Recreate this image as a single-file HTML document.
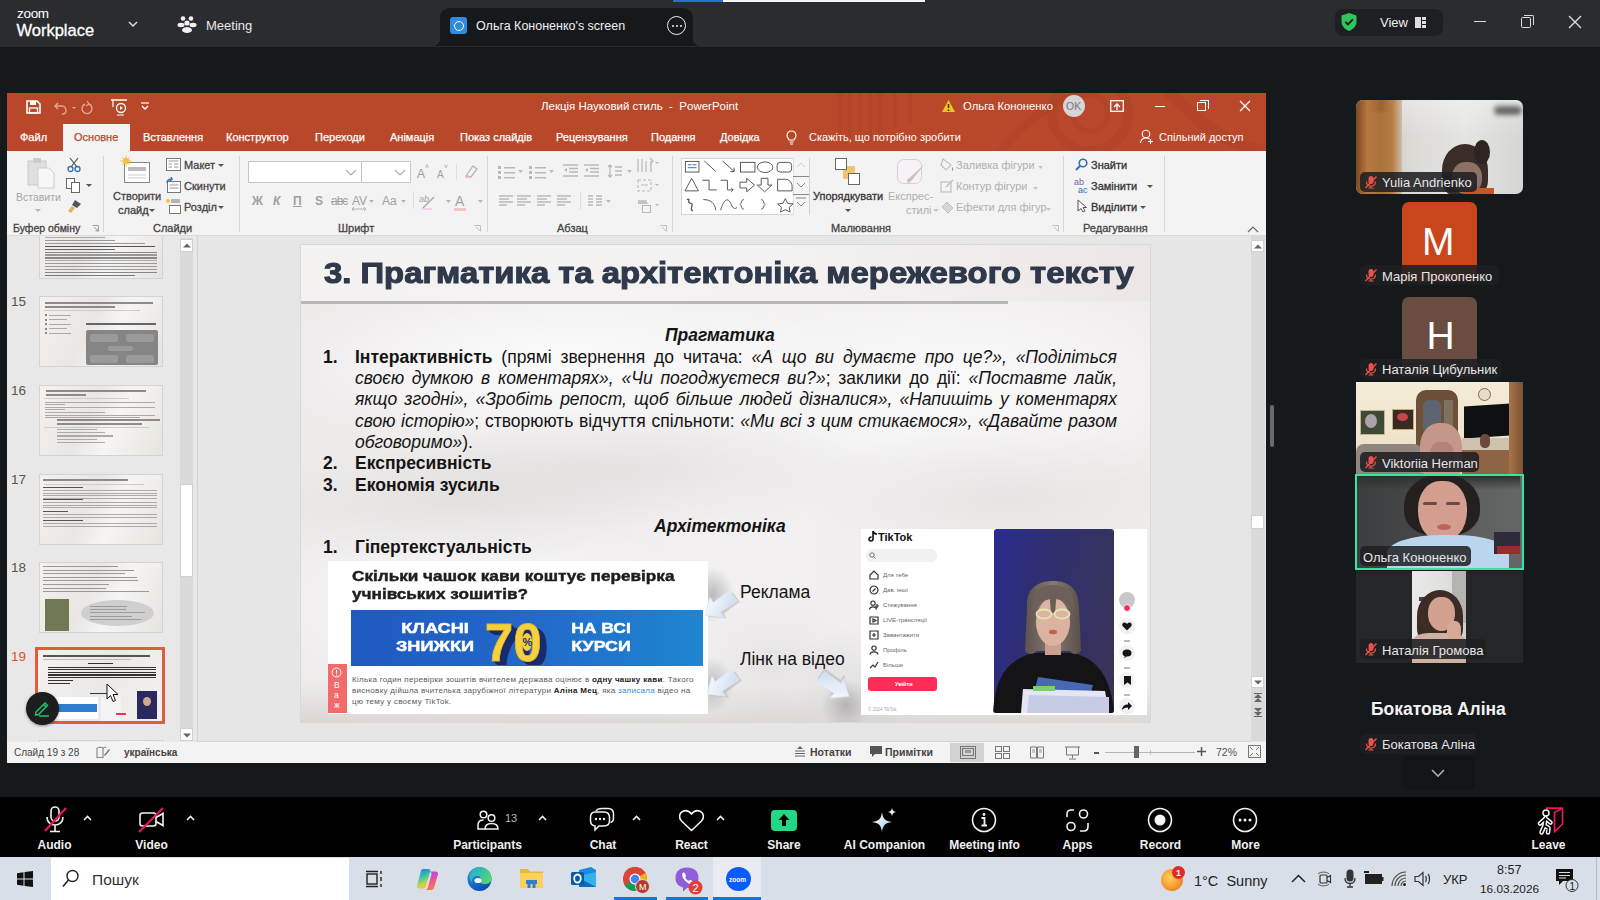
<!DOCTYPE html>
<html><head><meta charset="utf-8">
<style>
*{margin:0;padding:0;box-sizing:border-box}
html,body{width:1600px;height:900px;overflow:hidden;background:#16191c;font-family:"Liberation Sans",sans-serif;position:relative}
.a{position:absolute}
.t{position:absolute;white-space:nowrap;line-height:1}
svg{position:absolute;overflow:visible}
</style></head><body>
<div class="a" style="left:0px;top:0px;width:1600px;height:47px;background:#2b2c2f;"></div>
<div class="t" style="left:17px;top:7.1px;font-size:13.5px;color:#fff;font-weight:normal;font-style:normal;letter-spacing:-0.3px">zoom</div>
<div class="t" style="left:16.5px;top:22.0px;font-size:16.5px;color:#fff;font-weight:normal;font-style:normal;-webkit-text-stroke:0.3px #fff">Workplace</div>
<svg style="left:127px;top:19px" width="12" height="10" viewBox="0 0 12 10"><path d="M2 3 L6 7 L10 3" stroke="#ddd" stroke-width="1.5" fill="none"/></svg><svg style="left:177px;top:15px" width="20" height="20" viewBox="0 0 20 20" fill="#f2f2f2"><circle cx="6" cy="3.5" r="2.3"/><circle cx="14" cy="3.5" r="2.3"/><circle cx="10" cy="8" r="2.6"/><ellipse cx="4" cy="10" rx="3.5" ry="2.2"/><ellipse cx="16" cy="10" rx="3.5" ry="2.2"/><ellipse cx="10" cy="15" rx="5" ry="3"/></svg><div class="t" style="left:206px;top:19.0px;font-size:13px;color:#e8e8e8;font-weight:normal;font-style:normal;">Meeting</div>
<div class="a" style="left:440px;top:8px;width:253px;height:38px;background:#16191c;border-radius:9px 9px 0 0"></div>
<div class="a" style="left:432px;top:38px;width:8px;height:8px;background:radial-gradient(circle at 0 0,#2b2c2f 8px,#16191c 8.5px);"></div>
<div class="a" style="left:693px;top:38px;width:8px;height:8px;background:radial-gradient(circle at 100% 0,#2b2c2f 8px,#16191c 8.5px);"></div>
<div class="a" style="left:450px;top:17px;width:17px;height:17px;background:#2d8cdf;border-radius:3px"></div>
<div class="a" style="left:453.5px;top:20.5px;width:10px;height:10px;background:transparent;border:1.6px solid #fff;border-radius:50%"></div>
<div class="t" style="left:476px;top:20.2px;font-size:12.5px;color:#f0f0f0;font-weight:normal;font-style:normal;">Ольга Кононенко's screen</div>
<div class="a" style="left:667px;top:16px;width:19px;height:19px;background:transparent;border:1.6px solid #eee;border-radius:50%"></div>
<div class="a" style="left:671.5px;top:24.5px;width:2px;height:2px;background:#eee;box-shadow:4px 0 #eee,8px 0 #eee;border-radius:1px"></div>
<div class="a" style="left:673px;top:0px;width:50px;height:2px;background:#2c6fd1;"></div>
<div class="a" style="left:723px;top:0px;width:202px;height:2px;background:#f5f5f5;"></div>
<div class="a" style="left:1335px;top:9px;width:108px;height:27px;background:#1e1f22;border-radius:8px"></div>
<svg style="left:1340px;top:12px" width="18" height="20" viewBox="0 0 18 20"><path d="M9 1 L16.5 3.5 V9.5 C16.5 14 13 17.5 9 19 C5 17.5 1.5 14 1.5 9.5 V3.5 Z" fill="#2fc55a"/><path d="M5.3 9.8 L8 12.4 L12.8 7.4" stroke="#1a1a1a" stroke-width="1.8" fill="none"/></svg><div class="t" style="left:1380px;top:15.6px;font-size:13px;color:#eee;font-weight:normal;font-style:normal;">View</div>
<div class="a" style="left:1415px;top:17px;width:6px;height:11px;background:#ddd;"></div>
<div class="a" style="left:1422px;top:17px;width:4px;height:3px;background:#ddd;box-shadow:0 4px #ddd,0 8px #ddd"></div>
<div class="a" style="left:1474px;top:21px;width:12px;height:1.3px;background:#ddd;"></div>
<div class="a" style="left:1521px;top:17px;width:10px;height:11px;background:transparent;border:1.3px solid #ddd;border-radius:1.5px"></div>
<div class="a" style="left:1524px;top:15px;width:10px;height:10px;background:transparent;border-top:1.3px solid #ddd;border-right:1.3px solid #ddd;border-radius:0 2px 0 0"></div>
<svg style="left:1568px;top:15px" width="14" height="14" viewBox="0 0 14 14"><path d="M1 1 L13 13 M13 1 L1 13" stroke="#ddd" stroke-width="1.4"/></svg><div class="a" style="left:7px;top:93px;width:1259px;height:670px;background:#e6e6e6;"></div>
<div class="a" style="left:7px;top:93px;width:1259px;height:58px;background:#b9482b;"></div>
<svg style="left:800px;top:93px;overflow:hidden" width="466" height="58" viewBox="0 0 466 58"><g fill="none" stroke="#a63e24" stroke-opacity="0.35"><path d="M40 0 V40 M50 0 V45 M60 0 V38 M70 0 V48 M80 0 V42 M95 0 V35 M110 0 V30" stroke-width="4"/><circle cx="290" cy="20" r="38" stroke-width="10"/><circle cx="290" cy="20" r="18" stroke-width="5"/><path d="M360 -10 C400 30 420 50 470 60" stroke-width="12"/><path d="M200 60 C230 20 260 5 300 -5" stroke-width="8"/></g></svg><svg style="left:26px;top:100px" width="15" height="14" viewBox="0 0 15 14"><path d="M1 1 H11 L14 4 V13 H1 Z" fill="none" stroke="#fff" stroke-width="1.6"/><rect x="4" y="1" width="6" height="4" fill="#fff"/><rect x="3.5" y="8" width="8" height="5" fill="none" stroke="#fff" stroke-width="1.3"/></svg><svg style="left:53px;top:101px" width="40" height="14" viewBox="0 0 40 14"><path d="M3 5 H9 C12 5 13 8 13 10 C13 12 11 13 9 13" fill="none" stroke="#e8a797" stroke-width="1.4"/><path d="M5 2 L2 5 L5 8" fill="none" stroke="#e8a797" stroke-width="1.4"/><path d="M19 6 L21 8 L23 6" fill="#e8a797"/><path d="M36 3 A5 5 0 1 1 32 3" fill="none" stroke="#e8a797" stroke-width="1.4"/><path d="M34 0 L36 3 L33 5" fill="none" stroke="#e8a797" stroke-width="1.2"/></svg><svg style="left:111px;top:99px" width="16" height="17" viewBox="0 0 16 17"><path d="M0 1 H16" stroke="#fff" stroke-width="1.5"/><path d="M2 1 V8" stroke="#fff" stroke-width="1.2"/><circle cx="10" cy="9" r="4.5" fill="none" stroke="#fff" stroke-width="1.3"/><path d="M9 7 L12 9 L9 11 Z" fill="#fff"/><path d="M6 16 H13" stroke="#fff" stroke-width="1"/></svg><svg style="left:140px;top:102px" width="10" height="9" viewBox="0 0 10 9"><path d="M1 1 H9" stroke="#fff" stroke-width="1.2"/><path d="M2 4 L5 7 L8 4" fill="none" stroke="#fff" stroke-width="1.3"/></svg><div class="t" style="left:541px;top:101.3px;font-size:11.5px;color:#fff;font-weight:normal;font-style:normal;">Лекція Науковий стиль&nbsp; - &nbsp;PowerPoint</div>
<svg style="left:941px;top:99px" width="15" height="14" viewBox="0 0 15 14"><path d="M7.5 1 L14 13 H1 Z" fill="#f2c31b"/><path d="M7.5 5 V9 M7.5 10.5 V12" stroke="#333" stroke-width="1.5"/></svg><div class="t" style="left:963px;top:101.4px;font-size:11.3px;color:#fff;font-weight:normal;font-style:normal;">Ольга Кононенко</div>
<div class="a" style="left:1063px;top:95px;width:22px;height:22px;background:#d5d5d5;border-radius:50%"></div>
<div class="t" style="left:1066px;top:101.1px;font-size:10.5px;color:#777;font-weight:normal;font-style:normal;">OK</div>
<svg style="left:1110px;top:100px" width="14" height="12" viewBox="0 0 14 12"><rect x="0.7" y="0.7" width="12.6" height="10.6" fill="none" stroke="#fff" stroke-width="1.3"/><path d="M4 7 L7 4 L10 7 M7 4 V10" stroke="#fff" stroke-width="1.3" fill="none"/></svg><div class="a" style="left:1155px;top:106px;width:10px;height:1.2px;background:#fff;"></div>
<div class="a" style="left:1197px;top:102px;width:9px;height:9px;background:transparent;border:1.1px solid #fff"></div>
<div class="a" style="left:1199.5px;top:99.5px;width:9px;height:9px;background:transparent;border-top:1.1px solid #fff;border-right:1.1px solid #fff"></div>
<svg style="left:1239px;top:100px" width="12" height="12" viewBox="0 0 12 12"><path d="M1 1 L11 11 M11 1 L1 11" stroke="#fff" stroke-width="1.2"/></svg><div class="a" style="left:63px;top:124px;width:67px;height:28px;background:#f3f3f3;"></div>
<div class="t" style="left:20px;top:131.7px;font-size:11px;color:#fff;font-weight:normal;font-style:normal;-webkit-text-stroke:0.25px #fff">Файл</div>
<div class="t" style="left:143px;top:131.7px;font-size:11px;color:#fff;font-weight:normal;font-style:normal;-webkit-text-stroke:0.25px #fff">Вставлення</div>
<div class="t" style="left:226px;top:131.7px;font-size:11px;color:#fff;font-weight:normal;font-style:normal;-webkit-text-stroke:0.25px #fff">Конструктор</div>
<div class="t" style="left:315px;top:131.7px;font-size:11px;color:#fff;font-weight:normal;font-style:normal;-webkit-text-stroke:0.25px #fff">Переходи</div>
<div class="t" style="left:390px;top:131.7px;font-size:11px;color:#fff;font-weight:normal;font-style:normal;-webkit-text-stroke:0.25px #fff">Анімація</div>
<div class="t" style="left:460px;top:131.7px;font-size:11px;color:#fff;font-weight:normal;font-style:normal;-webkit-text-stroke:0.25px #fff">Показ слайдів</div>
<div class="t" style="left:556px;top:131.7px;font-size:11px;color:#fff;font-weight:normal;font-style:normal;-webkit-text-stroke:0.25px #fff">Рецензування</div>
<div class="t" style="left:651px;top:131.7px;font-size:11px;color:#fff;font-weight:normal;font-style:normal;-webkit-text-stroke:0.25px #fff">Подання</div>
<div class="t" style="left:720px;top:131.7px;font-size:11px;color:#fff;font-weight:normal;font-style:normal;-webkit-text-stroke:0.25px #fff">Довідка</div>
<div class="t" style="left:74px;top:131.7px;font-size:11px;color:#b9482b;font-weight:normal;font-style:normal;-webkit-text-stroke:0.25px #b9482b">Основне</div>
<svg style="left:786px;top:130px" width="11" height="15" viewBox="0 0 11 15"><path d="M5.5 1 C2.5 1 1 3 1 5.5 C1 7.5 2.5 8.5 3 10 H8 C8.5 8.5 10 7.5 10 5.5 C10 3 8.5 1 5.5 1 Z M3.5 12 H7.5 M4 14 H7" fill="none" stroke="#fff" stroke-width="1.1"/></svg><div class="t" style="left:809px;top:131.7px;font-size:11px;color:#fff;font-weight:normal;font-style:normal;">Скажіть, що потрібно зробити</div>
<svg style="left:1140px;top:129px" width="14" height="15" viewBox="0 0 14 15"><circle cx="6" cy="5" r="3.8" fill="none" stroke="#fff" stroke-width="1.1"/><path d="M0.5 14 C1 10 3 9 6 9 C7.5 9 8.5 9.3 9.5 10 M10.5 10 V15 M8 12.5 H13" fill="none" stroke="#fff" stroke-width="1.1"/></svg><div class="t" style="left:1159px;top:131.7px;font-size:11px;color:#fff;font-weight:normal;font-style:normal;">Спільний доступ</div>
<div class="a" style="left:7px;top:151px;width:1259px;height:85px;background:#f3f3f3;"></div>
<div class="a" style="left:7px;top:235px;width:1259px;height:1px;background:#dadada;"></div>
<div class="a" style="left:103px;top:156px;width:1px;height:76px;background:#d6d6d6;"></div>
<div class="a" style="left:239px;top:156px;width:1px;height:76px;background:#d6d6d6;"></div>
<div class="a" style="left:487px;top:156px;width:1px;height:76px;background:#d6d6d6;"></div>
<div class="a" style="left:671.5px;top:156px;width:1px;height:76px;background:#d6d6d6;"></div>
<div class="a" style="left:1063px;top:156px;width:1px;height:76px;background:#d6d6d6;"></div>
<div class="a" style="left:1164px;top:156px;width:1px;height:76px;background:#d6d6d6;"></div>
<svg style="left:26px;top:156px" width="30" height="34" viewBox="0 0 30 34"><rect x="2" y="5" width="18" height="24" fill="#e3dede" stroke="#cfcaca"/><rect x="7" y="2" width="8" height="5" rx="1" fill="#cfcaca"/><path d="M12 12 H23 L28 17 V32 H12 Z" fill="#f7f7f7" stroke="#cfcfcf"/></svg><div class="t" style="left:16px;top:192.1px;font-size:10.5px;color:#a6a6a6;font-weight:normal;font-style:normal;">Вставити</div>
<svg style="left:35px;top:209px" width="6" height="4" viewBox="0 0 6 4"><path d="M0 0 H6 L3 3 Z" fill="#b5b5b5"/></svg><svg style="left:66px;top:157px" width="16" height="15" viewBox="0 0 16 15"><path d="M4 1 L11 10 M12 1 L5 10" stroke="#555" stroke-width="1.2"/><circle cx="4.5" cy="12" r="2.5" fill="none" stroke="#2f6fb5" stroke-width="1.3"/><circle cx="11.5" cy="12" r="2.5" fill="none" stroke="#2f6fb5" stroke-width="1.3"/></svg><svg style="left:66px;top:178px" width="28" height="15" viewBox="0 0 28 15"><rect x="0.5" y="0.5" width="8" height="10" fill="#fff" stroke="#666"/><rect x="5.5" y="4.5" width="8" height="10" fill="#fff" stroke="#666"/><path d="M20 6 H26 L23 9 Z" fill="#555"/></svg><svg style="left:66px;top:199px" width="16" height="15" viewBox="0 0 16 15"><path d="M9 1 L15 5 L11 9 L6 6 Z" fill="#555"/><path d="M6 7 L2 12 L5 14 L9 9 Z" fill="#e0b062"/></svg><div class="t" style="left:13px;top:223.1px;font-size:10.5px;color:#444;font-weight:normal;font-style:normal;-webkit-text-stroke:0.3px #444">Буфер обміну</div>
<svg style="left:92px;top:225px" width="7" height="7" viewBox="0 0 7 7"><path d="M0.5 0.5 H6.5 V6.5 M2 2 L6 6 M6 3.5 V6 H3.5" fill="none" stroke="#999" stroke-width="0.9"/></svg><svg style="left:120px;top:155px" width="32" height="30" viewBox="0 0 32 30"><rect x="4.5" y="7.5" width="25" height="20" fill="#fff" stroke="#888"/><rect x="8" y="12" width="18" height="4" fill="#bbb"/><path d="M8 20 H26 M8 23 H26" stroke="#ccc"/><circle cx="6" cy="6" r="3.2" fill="#f5c242"/><path d="M6 0 V12 M0 6 H12 M2 2 L10 10 M10 2 L2 10" stroke="#f5c242" stroke-width="0.8"/></svg><div class="t" style="left:113px;top:190.7px;font-size:11px;color:#444;font-weight:normal;font-style:normal;-webkit-text-stroke:0.3px #444">Створити</div>
<div class="t" style="left:118px;top:204.7px;font-size:11px;color:#444;font-weight:normal;font-style:normal;-webkit-text-stroke:0.3px #444">слайд</div>
<svg style="left:149px;top:209px" width="6" height="4" viewBox="0 0 6 4"><path d="M0 0 H6 L3 3 Z" fill="#555"/></svg><svg style="left:166px;top:158px" width="15" height="13" viewBox="0 0 15 13"><rect x="0.5" y="0.5" width="14" height="12" fill="#fff" stroke="#777"/><path d="M2.5 3 H12.5 M2.5 6 H6 M2.5 9 H6 M8 6 H12.5 M8 9 H12.5" stroke="#999"/></svg><div class="t" style="left:184px;top:159.7px;font-size:11px;color:#444;font-weight:normal;font-style:normal;-webkit-text-stroke:0.3px #444">Макет</div>
<svg style="left:218px;top:164px" width="6" height="4" viewBox="0 0 6 4"><path d="M0 0 H6 L3 3 Z" fill="#555"/></svg><svg style="left:166px;top:178px" width="15" height="15" viewBox="0 0 15 15"><rect x="1.5" y="3.5" width="13" height="11" fill="#fff" stroke="#777"/><path d="M3.5 7 H12.5 M3.5 10 H12.5" stroke="#999"/><path d="M1 5 C1 2 3 1 6 1 L5 -1 M6 1 L4 3" stroke="#2f6fb5" stroke-width="1.3" fill="none"/></svg><div class="t" style="left:184px;top:180.7px;font-size:11px;color:#444;font-weight:normal;font-style:normal;-webkit-text-stroke:0.3px #444">Скинути</div>
<svg style="left:166px;top:199px" width="15" height="15" viewBox="0 0 15 15"><rect x="3.5" y="6.5" width="11" height="8" fill="#fff" stroke="#777"/><path d="M5 3 H14 M5 1 H14" stroke="#777"/><circle cx="2" cy="2" r="2" fill="#f5c242"/></svg><div class="t" style="left:184px;top:201.7px;font-size:11px;color:#444;font-weight:normal;font-style:normal;-webkit-text-stroke:0.3px #444">Розділ</div>
<svg style="left:218px;top:206px" width="6" height="4" viewBox="0 0 6 4"><path d="M0 0 H6 L3 3 Z" fill="#555"/></svg><div class="t" style="left:153px;top:222.7px;font-size:11px;color:#444;font-weight:normal;font-style:normal;-webkit-text-stroke:0.3px #444">Слайди</div>
<div class="a" style="left:247.5px;top:161px;width:114px;height:22px;background:#fff;border:1px solid #c6c6c6"></div>
<div class="a" style="left:361px;top:161px;width:50px;height:22px;background:#fff;border:1px solid #c6c6c6"></div>
<svg style="left:345px;top:169px" width="12" height="7" viewBox="0 0 12 7"><path d="M1 1 L6 6 L11 1" fill="none" stroke="#aaa" stroke-width="1.1"/></svg><svg style="left:394px;top:169px" width="12" height="7" viewBox="0 0 12 7"><path d="M1 1 L6 6 L11 1" fill="none" stroke="#aaa" stroke-width="1.1"/></svg><div class="t" style="left:417px;top:167.8px;font-size:12px;color:#a0a0a0;font-weight:normal;font-style:normal;">A</div>
<div class="t" style="left:425px;top:163.1px;font-size:7px;color:#a0a0a0;font-weight:normal;font-style:normal;">˄</div>
<div class="t" style="left:437px;top:169.5px;font-size:10px;color:#a0a0a0;font-weight:normal;font-style:normal;">A</div>
<div class="t" style="left:444px;top:163.1px;font-size:7px;color:#a0a0a0;font-weight:normal;font-style:normal;">˅</div>
<div class="a" style="left:456px;top:164px;width:1px;height:16px;background:#ddd;"></div>
<svg style="left:464px;top:164px" width="14" height="14" viewBox="0 0 14 14"><path d="M2 12 L9 2 L13 5 L7 13 Z" fill="none" stroke="#b5b5b5" stroke-width="1.3"/><path d="M1 13 H6" stroke="#e8b4d0" stroke-width="1.5"/></svg><div class="t" style="left:252px;top:194.8px;font-size:12px;color:#a0a0a0;font-weight:normal;font-style:normal;font-weight:bold">Ж</div>
<div class="t" style="left:273px;top:194.8px;font-size:12px;color:#a0a0a0;font-weight:normal;font-style:normal;font-style:italic;font-weight:bold">К</div>
<div class="t" style="left:293px;top:194.8px;font-size:12px;color:#a0a0a0;font-weight:normal;font-style:normal;text-decoration:underline;font-weight:bold">П</div>
<div class="t" style="left:315px;top:194.8px;font-size:12px;color:#a0a0a0;font-weight:normal;font-style:normal;font-weight:bold">S</div>
<div class="t" style="left:331px;top:194.8px;font-size:12px;color:#a0a0a0;font-weight:normal;font-style:normal;text-decoration:line-through;letter-spacing:-1px">abc</div>
<div class="t" style="left:352px;top:194.8px;font-size:12px;color:#a0a0a0;font-weight:normal;font-style:normal;">AV</div>
<div class="t" style="left:382px;top:194.8px;font-size:12px;color:#a0a0a0;font-weight:normal;font-style:normal;">Aa</div>
<svg style="left:352px;top:207px" width="14" height="4" viewBox="0 0 14 4"><path d="M0 2 H14 M0 2 L2 0 M0 2 L2 4 M14 2 L12 0 M14 2 L12 4" stroke="#aaa" stroke-width="0.9"/></svg><svg style="left:369px;top:200px" width="5" height="3" viewBox="0 0 5 3"><path d="M0 0 H5 L2.5 3 Z" fill="#b5b5b5"/></svg><svg style="left:401px;top:200px" width="5" height="3" viewBox="0 0 5 3"><path d="M0 0 H5 L2.5 3 Z" fill="#b5b5b5"/></svg><svg style="left:446px;top:200px" width="5" height="3" viewBox="0 0 5 3"><path d="M0 0 H5 L2.5 3 Z" fill="#b5b5b5"/></svg><svg style="left:478px;top:200px" width="5" height="3" viewBox="0 0 5 3"><path d="M0 0 H5 L2.5 3 Z" fill="#b5b5b5"/></svg><div class="a" style="left:413px;top:191px;width:1px;height:18px;background:#ddd;"></div>
<div class="t" style="left:419px;top:195.4px;font-size:9px;color:#a0a0a0;font-weight:normal;font-style:italic;">ab</div>
<svg style="left:420px;top:196px" width="16" height="14" viewBox="0 0 16 14"><path d="M2 13 L14 1" stroke="#aaa" stroke-width="1.5"/><path d="M2 13 H12" stroke="#f1d3e8" stroke-width="2"/></svg><div class="t" style="left:455px;top:194.1px;font-size:14px;color:#a0a0a0;font-weight:normal;font-style:normal;">A</div>
<div class="a" style="left:454px;top:208px;width:12px;height:2.5px;background:#f3c7c7;"></div>
<div class="t" style="left:338px;top:222.7px;font-size:11px;color:#444;font-weight:normal;font-style:normal;-webkit-text-stroke:0.3px #444">Шрифт</div>
<svg style="left:474px;top:225px" width="7" height="7" viewBox="0 0 7 7"><path d="M0.5 0.5 H6.5 V6.5 M2 2 L6 6" fill="none" stroke="#bbb" stroke-width="0.9"/></svg><svg style="left:497px;top:165px" width="20" height="14" viewBox="0 0 20 14"><rect x="1" y="1" width="3" height="3" fill="#b9b9b9"/><rect x="7" y="2" width="11" height="1.5" fill="#b9b9b9"/><rect x="1" y="6" width="3" height="3" fill="#b9b9b9"/><rect x="7" y="7" width="11" height="1.5" fill="#b9b9b9"/><rect x="1" y="11" width="3" height="3" fill="#b9b9b9"/><rect x="7" y="12" width="11" height="1.5" fill="#b9b9b9"/></svg><svg style="left:528px;top:165px" width="20" height="14" viewBox="0 0 20 14"><rect x="1" y="1" width="3" height="3" fill="#b9b9b9"/><rect x="7" y="2" width="11" height="1.5" fill="#b9b9b9"/><rect x="1" y="6" width="3" height="3" fill="#b9b9b9"/><rect x="7" y="7" width="11" height="1.5" fill="#b9b9b9"/><rect x="1" y="11" width="3" height="3" fill="#b9b9b9"/><rect x="7" y="12" width="11" height="1.5" fill="#b9b9b9"/></svg><svg style="left:518px;top:170px" width="5" height="3" viewBox="0 0 5 3"><path d="M0 0 H5 L2.5 3 Z" fill="#bbb"/></svg><svg style="left:549px;top:170px" width="5" height="3" viewBox="0 0 5 3"><path d="M0 0 H5 L2.5 3 Z" fill="#bbb"/></svg><svg style="left:563px;top:164px" width="15" height="13" viewBox="0 0 15 13"><path d="M0 1 H15 M6 4.5 H15 M6 8 H15 M0 12 H15" stroke="#b9b9b9" stroke-width="1.3"/><path d="M1 6 L4 4 V8 Z" fill="#b9b9b9"/></svg><svg style="left:584px;top:164px" width="15" height="13" viewBox="0 0 15 13"><path d="M0 1 H15 M6 4.5 H15 M6 8 H15 M0 12 H15" stroke="#b9b9b9" stroke-width="1.3"/><path d="M1 6 L4 4 V8 Z" fill="#b9b9b9"/></svg><svg style="left:607px;top:164px" width="20" height="14" viewBox="0 0 20 14"><path d="M3 1 V13 M1 3 L3 1 L5 3 M1 11 L3 13 L5 11 M8 3 H15 M8 7 H15 M8 11 H15" stroke="#b9b9b9" stroke-width="1.3" fill="none"/></svg><svg style="left:627px;top:170px" width="5" height="3" viewBox="0 0 5 3"><path d="M0 0 H5 L2.5 3 Z" fill="#bbb"/></svg><svg style="left:637px;top:157px" width="22" height="16" viewBox="0 0 22 16"><path d="M1 2 V15 M5 2 V15 M9 4 V15 M13 1 L16 4 L13 8 M14 4 V15" stroke="#b9b9b9" stroke-width="1.2" fill="none"/><path d="M18 5 H22 L20 7 Z" fill="#bbb"/></svg><svg style="left:637px;top:179px" width="22" height="13" viewBox="0 0 22 13"><path d="M1 1 H14 V12 H1 Z" stroke="#b9b9b9" stroke-width="1.1" fill="none" stroke-dasharray="3 2"/><path d="M4 6 H11" stroke="#b9b9b9"/><path d="M18 5 H22 L20 7 Z" fill="#bbb"/></svg><svg style="left:637px;top:199px" width="22" height="15" viewBox="0 0 22 15"><path d="M1 1 H9 L11 5 H1 Z" fill="#c4c4c4"/><rect x="5.5" y="6.5" width="8" height="7" fill="none" stroke="#b9b9b9"/><path d="M18 5 H22 L20 7 Z" fill="#bbb"/></svg><svg style="left:499px;top:195px" width="14" height="11" viewBox="0 0 14 11"><path d="M0 1 H14 M0 4 H10 M0 7 H14 M0 10 H8" stroke="#b9b9b9" stroke-width="1.3"/></svg><svg style="left:517px;top:195px" width="14" height="11" viewBox="0 0 14 11"><path d="M0 1 H14 M0 4 H10 M0 7 H14 M0 10 H8" stroke="#b9b9b9" stroke-width="1.3"/></svg><svg style="left:537px;top:195px" width="14" height="11" viewBox="0 0 14 11"><path d="M0 1 H14 M0 4 H10 M0 7 H14 M0 10 H8" stroke="#b9b9b9" stroke-width="1.3"/></svg><svg style="left:557px;top:195px" width="14" height="11" viewBox="0 0 14 11"><path d="M0 1 H14 M0 4 H10 M0 7 H14 M0 10 H8" stroke="#b9b9b9" stroke-width="1.3"/></svg><div class="a" style="left:580px;top:192px;width:1px;height:18px;background:#ddd;"></div>
<svg style="left:588px;top:195px" width="14" height="11" viewBox="0 0 14 11"><path d="M0 1 H5 M8 1 H14 M0 4 H5 M8 4 H14 M0 7 H5 M8 7 H14 M0 10 H5 M8 10 H14" stroke="#b9b9b9" stroke-width="1.3"/></svg><svg style="left:606px;top:200px" width="5" height="3" viewBox="0 0 5 3"><path d="M0 0 H5 L2.5 3 Z" fill="#bbb"/></svg><div class="t" style="left:557px;top:222.7px;font-size:11px;color:#444;font-weight:normal;font-style:normal;-webkit-text-stroke:0.3px #444">Абзац</div>
<svg style="left:660px;top:225px" width="7" height="7" viewBox="0 0 7 7"><path d="M0.5 0.5 H6.5 V6.5 M2 2 L6 6" fill="none" stroke="#bbb" stroke-width="0.9"/></svg><div class="a" style="left:680.5px;top:157.5px;width:129px;height:57px;background:#fff;border:1px solid #d4d4d4"></div>
<div class="a" style="left:793px;top:157.5px;width:16px;height:57px;background:#f5f5f5;border-left:1px solid #e0e0e0"></div>
<svg style="left:681px;top:159px" width="116" height="56" viewBox="0 0 118 58"><g fill="none" stroke="#555" stroke-width="1"><rect x="3.5" y="2.5" width="14" height="11"/><path d="M6 6 H10 M6 9 H15 M11 6 H15" stroke="#2f6fb5"/><path d="M23 2 L35 13"/><path d="M42 2 L54 13 M50 13 H54 V9"/><rect x="60.5" y="3.5" width="15" height="10"/><ellipse cx="86" cy="8.5" rx="8" ry="5.5"/><rect x="98.5" y="3.5" width="15" height="10" rx="3"/><path d="M3 33 L10 20 L17 33 Z"/><path d="M21 22 H28 V32 H36"/><path d="M40 22 H47 V32 H53 M51 30 L53 32 L51 34"/><path d="M60 24 H67 V20 L75 27 L67 34 V30 H60 Z"/><path d="M82 20 H89 V27 H93 L85.5 34 L78 27 H82 Z"/><path d="M99 21 H107 C112 21 114 26 114 28 V33 H99 Z"/><path d="M5 42 C10 40 4 45 9 46 C13 47 7 51 11 54" stroke-width="1.3"/><path d="M22 42 C30 42 34 46 35 53"/><path d="M40 53 C44 40 48 40 51 47 C53 52 55 52 57 50"/><path d="M64 42 C61 42 62 46 60 47 C62 48 61 52 64 52"/><path d="M82 42 C85 42 84 46 86 47 C84 48 85 52 82 52"/><path d="M107 41 L109.5 46 L115 46.5 L111 50 L112 55 L107 52.5 L102 55 L103 50 L99 46.5 L104.5 46 Z"/></g></svg><svg style="left:793px;top:158px" width="16" height="56" viewBox="0 0 16 56"><g fill="none" stroke="#888" stroke-width="1"><path d="M4 9 L8 5 L12 9" stroke="#ccc"/><path d="M4 25 L8 29 L12 25"/><path d="M3 40 H13 M4 44 L8 48 L12 44"/><path d="M0 18.5 H16 M0 36.5 H16"/></g></svg><svg style="left:835px;top:158px" width="26" height="28" viewBox="0 0 26 28"><rect x="8" y="8" width="12" height="13" fill="#f2c46d"/><rect x="0.5" y="0.5" width="11" height="11" fill="#fff" stroke="#666"/><rect x="13.5" y="15.5" width="11" height="11" fill="#fff" stroke="#666"/></svg><div class="t" style="left:813px;top:190.7px;font-size:11px;color:#333;font-weight:normal;font-style:normal;-webkit-text-stroke:0.3px #333">Упорядкувати</div>
<svg style="left:845px;top:209px" width="6" height="4" viewBox="0 0 6 4"><path d="M0 0 H6 L3 3 Z" fill="#555"/></svg><svg style="left:896px;top:158px" width="30" height="28" viewBox="0 0 30 28"><rect x="1.5" y="1.5" width="24" height="24" rx="6" fill="#f7f2f5" stroke="#d8d0d6"/><path d="M29 6 L16 22 L12 26 L11 22 Z" fill="#c9c0c6"/></svg><div class="t" style="left:888px;top:190.7px;font-size:11px;color:#b0b0b0;font-weight:normal;font-style:normal;">Експрес-</div>
<div class="t" style="left:906px;top:204.7px;font-size:11px;color:#b0b0b0;font-weight:normal;font-style:normal;">стилі</div>
<svg style="left:933px;top:209px" width="6" height="4" viewBox="0 0 6 4"><path d="M0 0 H6 L3 3 Z" fill="#c5c5c5"/></svg><div class="t" style="left:956px;top:159.7px;font-size:11px;color:#b0b0b0;font-weight:normal;font-style:normal;">Заливка фігури</div>
<div class="t" style="left:956px;top:180.7px;font-size:11px;color:#b0b0b0;font-weight:normal;font-style:normal;">Контур фігури</div>
<div class="t" style="left:956px;top:201.7px;font-size:11px;color:#b0b0b0;font-weight:normal;font-style:normal;">Ефекти для фігур</div>
<svg style="left:940px;top:158px" width="14" height="14" viewBox="0 0 14 14"><path d="M3 1 L11 7 L6 12 L1 7 Z" fill="none" stroke="#c0c0c0" stroke-width="1.2"/><path d="M12 9 C13 11 13 12 12 13" stroke="#c0c0c0"/></svg><svg style="left:940px;top:179px" width="14" height="14" viewBox="0 0 14 14"><rect x="1" y="3" width="10" height="10" fill="none" stroke="#c0c0c0" stroke-width="1.2"/><path d="M6 8 L13 1" stroke="#c0c0c0" stroke-width="1.4"/></svg><svg style="left:940px;top:200px" width="14" height="14" viewBox="0 0 14 14"><path d="M2 7 L7 2 L13 8 L8 13 Z" fill="#d6d6d6" stroke="#c0c0c0"/></svg><svg style="left:1038px;top:166px" width="5" height="3" viewBox="0 0 5 3"><path d="M0 0 H5 L2.5 3 Z" fill="#c5c5c5"/></svg><svg style="left:1033px;top:187px" width="5" height="3" viewBox="0 0 5 3"><path d="M0 0 H5 L2.5 3 Z" fill="#c5c5c5"/></svg><svg style="left:1046px;top:208px" width="5" height="3" viewBox="0 0 5 3"><path d="M0 0 H5 L2.5 3 Z" fill="#c5c5c5"/></svg><div class="t" style="left:831px;top:222.7px;font-size:11px;color:#444;font-weight:normal;font-style:normal;-webkit-text-stroke:0.3px #444">Малювання</div>
<svg style="left:1052px;top:225px" width="7" height="7" viewBox="0 0 7 7"><path d="M0.5 0.5 H6.5 V6.5 M2 2 L6 6" fill="none" stroke="#bbb" stroke-width="0.9"/></svg><svg style="left:1075px;top:158px" width="13" height="13" viewBox="0 0 13 13"><circle cx="8" cy="5" r="3.8" fill="none" stroke="#2f6fb5" stroke-width="1.6"/><path d="M5 8 L1 12" stroke="#2f6fb5" stroke-width="2"/></svg><div class="t" style="left:1091px;top:159.7px;font-size:11px;color:#333;font-weight:normal;font-style:normal;-webkit-text-stroke:0.3px #333">Знайти</div>
<div class="t" style="left:1074px;top:178.4px;font-size:9px;color:#7a5fb0;font-weight:normal;font-style:normal;">ab</div>
<div class="t" style="left:1078px;top:186.4px;font-size:9px;color:#2f6fb5;font-weight:normal;font-style:normal;">ac</div>
<div class="t" style="left:1091px;top:180.7px;font-size:11px;color:#333;font-weight:normal;font-style:normal;-webkit-text-stroke:0.3px #333">Замінити</div>
<svg style="left:1147px;top:185px" width="6" height="4" viewBox="0 0 6 4"><path d="M0 0 H6 L3 3 Z" fill="#555"/></svg><svg style="left:1077px;top:199px" width="10" height="14" viewBox="0 0 10 14"><path d="M1 1 V12 L4 9.5 L6 13 L8 12 L6 8.5 L9.5 8.5 Z" fill="#fff" stroke="#555" stroke-width="1"/></svg><div class="t" style="left:1091px;top:201.7px;font-size:11px;color:#333;font-weight:normal;font-style:normal;-webkit-text-stroke:0.3px #333">Виділити</div>
<svg style="left:1140px;top:206px" width="6" height="4" viewBox="0 0 6 4"><path d="M0 0 H6 L3 3 Z" fill="#555"/></svg><div class="t" style="left:1083px;top:222.7px;font-size:11px;color:#444;font-weight:normal;font-style:normal;-webkit-text-stroke:0.3px #444">Редагування</div>
<svg style="left:1247px;top:226px" width="12" height="7" viewBox="0 0 12 7"><path d="M1 6 L6 1 L11 6" fill="none" stroke="#666" stroke-width="1.1"/></svg><div class="a" style="left:7px;top:236px;width:190px;height:506px;background:#e8e8e8;"></div>
<div class="a" style="left:197px;top:236px;width:1px;height:506px;background:#d2d2d2;"></div>
<div class="a" style="left:198px;top:236px;width:1053px;height:505px;background:#e6e6e6;"></div>
<div class="a" style="left:198px;top:741px;width:1053px;height:1px;background:#d5d5d5;"></div>
<div class="a" style="left:180px;top:238px;width:13px;height:503px;background:#dadada;"></div>
<div class="a" style="left:180px;top:239px;width:13px;height:13px;background:#fff;border:1px solid #d0d0d0"></div>
<svg style="left:183px;top:243px" width="8" height="5" viewBox="0 0 8 5"><path d="M0 4.5 L4 0.5 L8 4.5 Z" fill="#666"/></svg><div class="a" style="left:180px;top:484px;width:13px;height:93px;background:#fff;border:1px solid #d0d0d0"></div>
<div class="a" style="left:180px;top:728px;width:13px;height:13px;background:#fff;border:1px solid #d0d0d0"></div>
<svg style="left:183px;top:733px" width="8" height="5" viewBox="0 0 8 5"><path d="M0 0.5 L4 4.5 L8 0.5 Z" fill="#666"/></svg><div class="a" style="left:1251px;top:236px;width:14px;height:505px;background:#dadada;"></div>
<div class="a" style="left:1251px;top:240px;width:13px;height:12px;background:#fff;border:1px solid #d0d0d0"></div>
<svg style="left:1254px;top:244px" width="8" height="5" viewBox="0 0 8 5"><path d="M0 4.5 L4 0.5 L8 4.5 Z" fill="#666"/></svg><div class="a" style="left:1251px;top:515px;width:13px;height:14px;background:#fff;border:1px solid #d0d0d0"></div>
<div class="a" style="left:1251px;top:676px;width:13px;height:12px;background:#fff;border:1px solid #d0d0d0"></div>
<svg style="left:1254px;top:680px" width="8" height="5" viewBox="0 0 8 5"><path d="M0 0.5 L4 4.5 L8 0.5 Z" fill="#666"/></svg><svg style="left:1253px;top:692px" width="10" height="26" viewBox="0 0 10 26"><path d="M1 6 L5 2 L9 6 Z M1 10 L5 6 L9 10 Z" fill="#666"/><path d="M1 16 L5 20 L9 16 Z M1 20 L5 24 L9 20 Z" fill="#666"/><path d="M1 1.5 H9 M1 24.5 H9" stroke="#666"/></svg><div class="a" style="left:7px;top:742px;width:1259px;height:21px;background:#f3f3f3;"></div>
<div class="t" style="left:14px;top:747.5px;font-size:10px;color:#444;font-weight:normal;font-style:normal;">Слайд 19 з 28</div>
<svg style="left:96px;top:746px" width="14" height="13" viewBox="0 0 14 13"><path d="M1 2 C3 1 5 1 7 2 V12 C5 11 3 11 1 12 Z M7 2 C8 1.5 9 1.2 10 1.2" fill="none" stroke="#777" stroke-width="1"/><path d="M8 9 L13 3 L14 4 L9 10 Z" fill="#777"/></svg><div class="t" style="left:124px;top:747.5px;font-size:10px;color:#444;font-weight:bold;font-style:normal;">українська</div>
<svg style="left:795px;top:746px" width="10" height="11" viewBox="0 0 10 11"><path d="M5 0 L2 3 H8 Z" fill="#666"/><path d="M0 5 H10 M0 7.5 H10 M0 10 H10" stroke="#666"/></svg><div class="t" style="left:810px;top:747.1px;font-size:10.5px;color:#444;font-weight:bold;font-style:normal;">Нотатки</div>
<svg style="left:869px;top:745px" width="14" height="13" viewBox="0 0 14 13"><path d="M1 1 H13 V9 H6 L3 12 V9 H1 Z" fill="#555"/></svg><div class="t" style="left:885px;top:747.1px;font-size:10.5px;color:#444;font-weight:bold;font-style:normal;">Примітки</div>
<div class="a" style="left:950px;top:743px;width:34px;height:19px;background:#d2d2d2;"></div>
<svg style="left:960px;top:746px" width="16" height="13" viewBox="0 0 16 13"><rect x="0.5" y="0.5" width="15" height="12" fill="none" stroke="#777"/><rect x="2.5" y="2.5" width="11" height="7" fill="none" stroke="#777"/><rect x="5" y="4" width="6" height="3" fill="#999"/></svg><svg style="left:995px;top:746px" width="15" height="13" viewBox="0 0 15 13"><rect x="0.5" y="0.5" width="6" height="5" fill="none" stroke="#777"/><rect x="8.5" y="0.5" width="6" height="5" fill="none" stroke="#777"/><rect x="0.5" y="7.5" width="6" height="5" fill="none" stroke="#777"/><rect x="8.5" y="7.5" width="6" height="5" fill="none" stroke="#777"/></svg><svg style="left:1030px;top:746px" width="14" height="13" viewBox="0 0 14 13"><path d="M0.5 1 H6.5 V12 H0.5 Z M7.5 1 H13.5 V12 H7.5 Z" fill="none" stroke="#777"/><path d="M2 4 H5 M2 6 H5 M9 4 H12 M9 6 H12" stroke="#999"/></svg><svg style="left:1065px;top:746px" width="15" height="14" viewBox="0 0 15 14"><path d="M0 1 H15 M1.5 1 V9 H13.5 V1 M7.5 9 V12 M4 13 H11" fill="none" stroke="#777"/></svg><div class="a" style="left:1094px;top:752px;width:5px;height:1.5px;background:#555;"></div>
<div class="a" style="left:1105px;top:752px;width:90px;height:1px;background:#b5b5b5;"></div>
<div class="a" style="left:1134px;top:746px;width:5px;height:12px;background:#666;"></div>
<div class="a" style="left:1150px;top:750px;width:1px;height:5px;background:#c0c0c0;"></div>
<svg style="left:1197px;top:747px" width="9" height="9" viewBox="0 0 9 9"><path d="M4.5 0 V9 M0 4.5 H9" stroke="#555" stroke-width="1.5"/></svg><div class="t" style="left:1216px;top:747.1px;font-size:10.5px;color:#555;font-weight:normal;font-style:normal;">72%</div>
<svg style="left:1248px;top:745px" width="13" height="13" viewBox="0 0 13 13"><rect x="0.5" y="0.5" width="12" height="12" fill="none" stroke="#777"/><path d="M2 2 L5 5 M11 2 L8 5 M2 11 L5 8 M11 11 L8 8" stroke="#777"/></svg><div class="a" style="left:0;top:0;width:1600px;height:900px;clip-path:inset(236px 1403px 158px 7px)"><div class="a" style="left:38.5px;top:208px;width:124px;height:71px;background:linear-gradient(115deg,#f4f1ef 0%,#e9e6e4 40%,#f7f5f3 60%,#e7e3df 100%);border:1px solid #d6d2cf"></div>
<div class="a" style="left:38.5px;top:296px;width:124px;height:71px;background:linear-gradient(115deg,#f4f1ef 0%,#e9e6e4 40%,#f7f5f3 60%,#e7e3df 100%);border:1px solid #d6d2cf"></div>
<div class="a" style="left:38.5px;top:385px;width:124px;height:71px;background:linear-gradient(115deg,#f4f1ef 0%,#e9e6e4 40%,#f7f5f3 60%,#e7e3df 100%);border:1px solid #d6d2cf"></div>
<div class="a" style="left:38.5px;top:474px;width:124px;height:71px;background:linear-gradient(115deg,#f4f1ef 0%,#e9e6e4 40%,#f7f5f3 60%,#e7e3df 100%);border:1px solid #d6d2cf"></div>
<div class="a" style="left:38.5px;top:562px;width:124px;height:71px;background:linear-gradient(115deg,#f4f1ef 0%,#e9e6e4 40%,#f7f5f3 60%,#e7e3df 100%);border:1px solid #d6d2cf"></div>
<div class="a" style="left:38.5px;top:740px;width:124px;height:71px;background:linear-gradient(115deg,#f4f1ef 0%,#e9e6e4 40%,#f7f5f3 60%,#e7e3df 100%);border:1px solid #d6d2cf"></div>
<div class="a" style="left:45px;top:237.0px;width:60px;height:1.3px;background:#aaa;"></div>
<div class="a" style="left:45px;top:239.9px;width:70px;height:1.3px;background:#999;"></div>
<div class="a" style="left:45px;top:242.8px;width:100px;height:1.3px;background:#999;"></div>
<div class="a" style="left:45px;top:245.7px;width:110px;height:1.3px;background:#555;"></div>
<div class="a" style="left:45px;top:248.6px;width:70px;height:1.3px;background:#666;"></div>
<div class="a" style="left:45px;top:251.5px;width:112px;height:1.3px;background:#888;"></div>
<div class="a" style="left:45px;top:254.4px;width:112px;height:1.3px;background:#999;"></div>
<div class="a" style="left:45px;top:257.3px;width:112px;height:1.3px;background:#888;"></div>
<div class="a" style="left:45px;top:260.2px;width:112px;height:1.3px;background:#aaa;"></div>
<div class="a" style="left:45px;top:263.1px;width:112px;height:1.3px;background:#999;"></div>
<div class="a" style="left:45px;top:266.0px;width:112px;height:1.3px;background:#999;"></div>
<div class="a" style="left:45px;top:268.9px;width:112px;height:1.3px;background:#999;"></div>
<div class="a" style="left:45px;top:271.8px;width:112px;height:1.3px;background:#888;"></div>
<div class="a" style="left:45px;top:274.7px;width:90px;height:1.3px;background:#777;"></div>
<div class="a" style="left:45px;top:302px;width:108px;height:1.8px;background:#8f8a88;"></div>
<div class="a" style="left:45px;top:306px;width:70px;height:1.8px;background:#8f8a88;"></div>
<div class="a" style="left:44px;top:310px;width:96px;height:0.6px;background:#ccc;"></div>
<div class="a" style="left:45px;top:314.0px;width:2px;height:2px;background:#888;"></div>
<div class="a" style="left:49px;top:314.5px;width:22px;height:1px;background:#aaa;"></div>
<div class="a" style="left:45px;top:318.5px;width:2px;height:2px;background:#888;"></div>
<div class="a" style="left:49px;top:319.0px;width:18px;height:1px;background:#aaa;"></div>
<div class="a" style="left:45px;top:323.0px;width:2px;height:2px;background:#888;"></div>
<div class="a" style="left:49px;top:323.5px;width:22px;height:1px;background:#aaa;"></div>
<div class="a" style="left:45px;top:327.5px;width:2px;height:2px;background:#888;"></div>
<div class="a" style="left:49px;top:328.0px;width:18px;height:1px;background:#aaa;"></div>
<div class="a" style="left:45px;top:332.0px;width:2px;height:2px;background:#888;"></div>
<div class="a" style="left:49px;top:332.5px;width:22px;height:1px;background:#aaa;"></div>
<div class="a" style="left:86px;top:323px;width:70px;height:1.6px;background:#666;"></div>
<div class="a" style="left:86px;top:330px;width:72px;height:35px;background:#858585;border-radius:2px"></div>
<div class="a" style="left:90px;top:334px;width:28px;height:8px;background:#9a9a9a;border-radius:2px"></div>
<div class="a" style="left:126px;top:334px;width:28px;height:8px;background:#9a9a9a;border-radius:2px"></div>
<div class="a" style="left:108px;top:346px;width:25px;height:5px;background:#9a9a9a;border-radius:2px"></div>
<div class="a" style="left:90px;top:355px;width:28px;height:8px;background:#9a9a9a;border-radius:2px"></div>
<div class="a" style="left:126px;top:355px;width:28px;height:8px;background:#9a9a9a;border-radius:2px"></div>
<div class="a" style="left:46px;top:390px;width:100px;height:1.8px;background:#8f8a88;"></div>
<div class="a" style="left:46px;top:394px;width:40px;height:1.8px;background:#8f8a88;"></div>
<div class="a" style="left:44px;top:398px;width:85px;height:0.6px;background:#ccc;"></div>
<div class="a" style="left:45px;top:401.5px;width:110px;height:1px;background:#aaa;"></div>
<div class="a" style="left:45px;top:404.1px;width:20px;height:1px;background:#aaa;"></div>
<div class="a" style="left:45px;top:406.7px;width:110px;height:1px;background:#aaa;"></div>
<div class="a" style="left:45px;top:409.3px;width:20px;height:1px;background:#aaa;"></div>
<div class="a" style="left:45px;top:411.9px;width:60px;height:1px;background:#aaa;"></div>
<div class="a" style="left:45px;top:414.5px;width:110px;height:1px;background:#aaa;"></div>
<div class="a" style="left:45px;top:417.1px;width:95px;height:1px;background:#aaa;"></div>
<div class="a" style="left:57px;top:419px;width:103px;height:1.8px;background:#8f8a88;"></div>
<div class="a" style="left:57px;top:423px;width:85px;height:1.8px;background:#8f8a88;"></div>
<div class="a" style="left:44px;top:427px;width:105px;height:0.6px;background:#ccc;"></div>
<div class="a" style="left:57px;top:429.0px;width:40px;height:1.2px;background:#aaa;"></div>
<div class="a" style="left:57px;top:432.2px;width:48px;height:1.2px;background:#aaa;"></div>
<div class="a" style="left:57px;top:435.4px;width:56px;height:1.2px;background:#aaa;"></div>
<div class="a" style="left:57px;top:438.6px;width:40px;height:1.2px;background:#aaa;"></div>
<div class="a" style="left:57px;top:441.8px;width:48px;height:1.2px;background:#aaa;"></div>
<div class="a" style="left:43px;top:479px;width:85px;height:1.8px;background:#8f8a88;"></div>
<div class="a" style="left:44px;top:484px;width:100px;height:0.6px;background:#ccc;"></div>
<div class="a" style="left:43px;top:487px;width:40px;height:1.4px;background:#555;"></div>
<div class="a" style="left:43px;top:490.0px;width:114px;height:1px;background:#aaa;"></div>
<div class="a" style="left:43px;top:492.6px;width:114px;height:1px;background:#aaa;"></div>
<div class="a" style="left:43px;top:495.2px;width:114px;height:1px;background:#aaa;"></div>
<div class="a" style="left:43px;top:497.8px;width:114px;height:1px;background:#aaa;"></div>
<div class="a" style="left:43px;top:499px;width:40px;height:1.4px;background:#555;"></div>
<div class="a" style="left:43px;top:502.0px;width:114px;height:1px;background:#aaa;"></div>
<div class="a" style="left:43px;top:504.6px;width:114px;height:1px;background:#aaa;"></div>
<div class="a" style="left:43px;top:507.2px;width:114px;height:1px;background:#aaa;"></div>
<div class="a" style="left:43px;top:511px;width:25px;height:1.4px;background:#555;"></div>
<div class="a" style="left:43px;top:514.0px;width:114px;height:1px;background:#aaa;"></div>
<div class="a" style="left:43px;top:516.6px;width:114px;height:1px;background:#aaa;"></div>
<div class="a" style="left:43px;top:520px;width:40px;height:1.4px;background:#555;"></div>
<div class="a" style="left:43px;top:523.0px;width:114px;height:1px;background:#aaa;"></div>
<div class="a" style="left:43px;top:525.6px;width:114px;height:1px;background:#aaa;"></div>
<div class="a" style="left:43px;top:566.0px;width:74.9px;height:1.1px;background:#999;"></div>
<div class="a" style="left:43px;top:569.6px;width:90.6px;height:1.1px;background:#999;"></div>
<div class="a" style="left:43px;top:573.2px;width:81.7px;height:1.1px;background:#999;"></div>
<div class="a" style="left:43px;top:576.8px;width:93.7px;height:1.1px;background:#999;"></div>
<div class="a" style="left:43px;top:580.4px;width:94.8px;height:1.1px;background:#999;"></div>
<div class="a" style="left:43px;top:584.0px;width:66.1px;height:1.1px;background:#999;"></div>
<div class="a" style="left:43px;top:587.6px;width:63.4px;height:1.1px;background:#999;"></div>
<div class="a" style="left:43px;top:591.2px;width:105.7px;height:1.1px;background:#999;"></div>
<div class="a" style="left:45px;top:599px;width:24px;height:32px;background:#6f7a55;"></div>
<div class="a" style="left:81px;top:600px;width:73px;height:26px;background:#cfcfcf;border-radius:50%"></div>
<div class="a" style="left:90px;top:606.0px;width:36.7px;height:1px;background:#9b9b9b;"></div>
<div class="a" style="left:90px;top:609.2px;width:36.0px;height:1px;background:#9b9b9b;"></div>
<div class="a" style="left:90px;top:612.4px;width:54.9px;height:1px;background:#9b9b9b;"></div>
<div class="a" style="left:90px;top:615.6px;width:41.9px;height:1px;background:#9b9b9b;"></div>
<div class="a" style="left:90px;top:618.8px;width:51.0px;height:1px;background:#9b9b9b;"></div>
<div class="a" style="left:35px;top:647px;width:130px;height:77px;background:#e05c3a;"></div>
<div class="a" style="left:38px;top:650px;width:124px;height:71px;background:linear-gradient(115deg,#f4f1ef 0%,#ebe8e6 50%,#f4f2f0 100%);"></div>
<div class="a" style="left:43px;top:655px;width:107px;height:2px;background:#555;"></div>
<div class="a" style="left:43px;top:659px;width:88px;height:0.8px;background:#bbb;"></div>
<div class="a" style="left:88px;top:663px;width:25px;height:1.3px;background:#333;"></div>
<div class="a" style="left:48px;top:666.5px;width:108px;height:1.4px;background:#333;"></div>
<div class="a" style="left:48px;top:669.1px;width:108px;height:1.4px;background:#333;"></div>
<div class="a" style="left:48px;top:671.7px;width:108px;height:1.4px;background:#333;"></div>
<div class="a" style="left:48px;top:674.3px;width:108px;height:1.4px;background:#333;"></div>
<div class="a" style="left:48px;top:676.9px;width:108px;height:1.4px;background:#333;"></div>
<div class="a" style="left:48px;top:680px;width:25px;height:1.3px;background:#333;"></div>
<div class="a" style="left:48px;top:683px;width:22px;height:1.3px;background:#333;"></div>
<div class="a" style="left:90px;top:693px;width:20px;height:1.3px;background:#333;"></div>
<div class="a" style="left:44px;top:697px;width:54px;height:22px;background:#fff;"></div>
<div class="a" style="left:47px;top:704px;width:50px;height:8px;background:#2f7ed0;"></div>
<div class="a" style="left:101px;top:697px;width:20px;height:24px;background:#f4f4f4;"></div>
<div class="a" style="left:116px;top:713px;width:10px;height:2px;background:#fe2c55;"></div>
<div class="a" style="left:137px;top:691px;width:20px;height:28px;background:#2a2a60;"></div>
<div class="a" style="left:143px;top:697px;width:8px;height:9px;background:#cfa88f;border-radius:50%"></div>
<svg style="left:106px;top:683px" width="14" height="20" viewBox="0 0 14 20"><path d="M1 1 V16 L4.5 12.5 L7 18.5 L9.5 17.5 L7 11.5 L12 11.5 Z" fill="#fff" stroke="#111" stroke-width="1"/></svg><div class="a" style="left:25.5px;top:691.5px;width:33px;height:33px;background:#1b1d1f;border-radius:50%;box-shadow:0 1px 3px rgba(0,0,0,0.4)"></div>
<svg style="left:33px;top:699px" width="18" height="18" viewBox="0 0 18 18"><path d="M3 13 L12 4 L14.5 6.5 L5.5 15.5 L2.5 16 Z M10.5 5.5 L13 8" fill="none" stroke="#21c46a" stroke-width="1.5"/><path d="M6 17 H16" stroke="#21c46a" stroke-width="1.5"/></svg><div class="t" style="left:11px;top:295.1px;font-size:13.5px;color:#555;font-weight:normal;font-style:normal;">15</div>
<div class="t" style="left:11px;top:384.1px;font-size:13.5px;color:#555;font-weight:normal;font-style:normal;">16</div>
<div class="t" style="left:11px;top:473.1px;font-size:13.5px;color:#555;font-weight:normal;font-style:normal;">17</div>
<div class="t" style="left:11px;top:561.1px;font-size:13.5px;color:#555;font-weight:normal;font-style:normal;">18</div>
<div class="t" style="left:11px;top:649.6px;font-size:13.5px;color:#d9542f;font-weight:normal;font-style:normal;">19</div>
<div class="t" style="left:11px;top:740.6px;font-size:13.5px;color:#555;font-weight:normal;font-style:normal;">20</div>
</div><div class="a" style="left:301px;top:245px;width:849px;height:477px;background:radial-gradient(ellipse 90px 70px at 470px 420px,rgba(140,140,145,0.12),rgba(160,160,165,0) 100%),radial-gradient(ellipse 22px 28px at 411px 350px,rgba(120,120,125,0.45),rgba(160,160,165,0) 100%),radial-gradient(ellipse 22px 28px at 411px 440px,rgba(120,120,125,0.40),rgba(160,160,165,0) 100%),radial-gradient(ellipse 25px 25px at 545px 460px,rgba(120,120,125,0.40),rgba(160,160,165,0) 100%),radial-gradient(ellipse 70px 60px at 560px 440px,rgba(150,150,155,0.15),rgba(160,160,165,0) 100%),radial-gradient(ellipse 60px 80px at 420px 300px,rgba(170,170,170,0.0),rgba(170,170,170,0) 100%),radial-gradient(ellipse 260px 60px at 330px 225px,rgba(185,180,180,0.22),rgba(185,180,180,0) 100%),radial-gradient(ellipse 220px 60px at 150px 260px,rgba(200,195,195,0.25),rgba(200,195,195,0) 100%),radial-gradient(ellipse 200px 70px at 700px 250px,rgba(195,190,190,0.22),rgba(195,190,190,0) 100%),radial-gradient(ellipse 300px 90px at 250px 120px,rgba(255,255,255,0.8),rgba(255,255,255,0) 100%),radial-gradient(ellipse 300px 120px at 650px 140px,rgba(255,255,255,0.7),rgba(255,255,255,0) 100%),radial-gradient(ellipse 260px 100px at 150px 360px,rgba(255,255,255,0.6),rgba(255,255,255,0) 100%),linear-gradient(180deg,rgba(0,0,0,0) 92%,rgba(190,180,170,0.35) 100%),linear-gradient(90deg,#edeaea 0%,#f2f0f0 50%,#efecec 100%);box-shadow:0 0 0 1px #d8d8d8"></div>
<div class="a" style="left:301px;top:245px;width:849px;height:56px;background:linear-gradient(90deg,rgba(250,248,247,0.6),rgba(248,245,244,0.3) 60%,rgba(232,224,220,0.45));"></div>
<div class="a" style="left:301px;top:301px;width:707px;height:2.5px;background:#b8b6b6;"></div>
<div class="t" style="left:323.5px;top:257.8px;font-size:29.8px;color:#2e394b;font-weight:bold;font-style:normal;transform:scaleX(1.102);transform-origin:0 0;-webkit-text-stroke:1.1px #2e394b">3. Прагматика та архітектоніка мережевого тексту</div>
<div class="t" style="left:665px;top:327.2px;font-size:17.5px;color:#141414;font-weight:bold;font-style:italic;">Прагматика</div>
<div class="t" style="left:323px;top:348.8px;font-size:17.5px;color:#141414;font-weight:bold;font-style:normal;">1.</div>
<div class="a" style="left:355px;top:348.8px;width:762px;font-size:17.5px;line-height:1;color:#141414;white-space:nowrap;display:flex;justify-content:space-between"><span><b>Інтерактивність</b></span><span>(прямі</span><span>звернення</span><span>до</span><span>читача:</span><span><i>«А</i></span><span><i>що</i></span><span><i>ви</i></span><span><i>думаєте</i></span><span><i>про</i></span><span><i>це?»,</i></span><span><i>«Поділіться</i></span></div>
<div class="a" style="left:355px;top:370.1px;width:762px;font-size:17.5px;line-height:1;color:#141414;white-space:nowrap;display:flex;justify-content:space-between"><span><i>своєю</i></span><span><i>думкою</i></span><span><i>в</i></span><span><i>коментарях»,</i></span><span><i>«Чи</i></span><span><i>погоджуєтеся</i></span><span><i>ви?»</i>;</span><span>заклики</span><span>до</span><span>дії:</span><span><i>«Поставте</i></span><span><i>лайк,</i></span></div>
<div class="a" style="left:355px;top:391.4px;width:762px;font-size:17.5px;line-height:1;color:#141414;white-space:nowrap;display:flex;justify-content:space-between"><span><i>якщо</i></span><span><i>згодні»,</i></span><span><i>«Зробіть</i></span><span><i>репост,</i></span><span><i>щоб</i></span><span><i>більше</i></span><span><i>людей</i></span><span><i>дізналися»,</i></span><span><i>«Напишіть</i></span><span><i>у</i></span><span><i>коментарях</i></span></div>
<div class="a" style="left:355px;top:412.7px;width:762px;font-size:17.5px;line-height:1;color:#141414;white-space:nowrap;display:flex;justify-content:space-between"><span><i>свою</i></span><span><i>історію»</i>;</span><span>створюють</span><span>відчуття</span><span>спільноти:</span><span><i>«Ми</i></span><span><i>всі</i></span><span><i>з</i></span><span><i>цим</i></span><span><i>стикаємося»,</i></span><span><i>«Давайте</i></span><span><i>разом</i></span></div>
<div class="t" style="left:355px;top:434.0px;font-size:17.5px;color:#141414;font-weight:normal;font-style:normal;"><i>обговоримо»</i>).</div>
<div class="t" style="left:323px;top:455.3px;font-size:17.5px;color:#141414;font-weight:bold;font-style:normal;">2.</div>
<div class="t" style="left:355px;top:455.3px;font-size:17.5px;color:#141414;font-weight:bold;font-style:normal;">Експресивність</div>
<div class="t" style="left:323px;top:476.6px;font-size:17.5px;color:#141414;font-weight:bold;font-style:normal;">3.</div>
<div class="t" style="left:355px;top:476.6px;font-size:17.5px;color:#141414;font-weight:bold;font-style:normal;">Економія зусиль</div>
<div class="t" style="left:654px;top:517.5px;font-size:17.5px;color:#141414;font-weight:bold;font-style:italic;">Архітектоніка</div>
<div class="t" style="left:323px;top:539.2px;font-size:17.5px;color:#141414;font-weight:bold;font-style:normal;">1.</div>
<div class="t" style="left:355px;top:539.2px;font-size:17.5px;color:#141414;font-weight:bold;font-style:normal;">Гіпертекстуальність</div>
<div class="a" style="left:328px;top:561px;width:380px;height:153px;background:#fff;"></div>
<div class="t" style="left:352px;top:569.1px;font-size:14.8px;color:#1e1e1e;font-weight:bold;font-style:normal;transform:scaleX(1.16);transform-origin:0 0;-webkit-text-stroke:0.45px #1e1e1e">Скільки чашок кави коштує перевірка</div>
<div class="t" style="left:352px;top:586.9px;font-size:14.8px;color:#1e1e1e;font-weight:bold;font-style:normal;transform:scaleX(1.16);transform-origin:0 0;-webkit-text-stroke:0.45px #1e1e1e">учнівських зошитів?</div>
<div class="a" style="left:351px;top:609.5px;width:351.5px;height:56px;background:linear-gradient(90deg,#1f5ac0 0%,#2266c8 45%,#1e86d2 100%);"></div>
<div class="t" style="left:374.5px;top:620.4px;width:120px;text-align:center;font-size:15.5px;font-weight:bold;color:#fff;transform:scaleX(1.17);-webkit-text-stroke:0.5px #fff">КЛАСНІ</div><div class="t" style="left:374.5px;top:638.4px;width:120px;text-align:center;font-size:15.5px;font-weight:bold;color:#fff;transform:scaleX(1.17);-webkit-text-stroke:0.5px #fff">ЗНИЖКИ</div><div class="t" style="left:540.5px;top:620.4px;width:120px;text-align:center;font-size:15.5px;font-weight:bold;color:#fff;transform:scaleX(1.13);-webkit-text-stroke:0.5px #fff">НА ВСІ</div><div class="t" style="left:540.5px;top:638.4px;width:120px;text-align:center;font-size:15.5px;font-weight:bold;color:#fff;transform:scaleX(1.15);-webkit-text-stroke:0.5px #fff">КУРСИ</div><svg style="left:482px;top:609px;overflow:hidden" width="85" height="56" viewBox="0 0 85 56"><text x="4.2" y="52.9" font-family="Liberation Sans" font-weight="bold" font-size="54" fill="#1a2a6e" transform="scale(0.95,1)">70</text><text x="5.4" y="53.8" font-family="Liberation Sans" font-weight="bold" font-size="54" fill="#1a2a6e" transform="scale(0.95,1)">70</text><text x="6.6" y="54.7" font-family="Liberation Sans" font-weight="bold" font-size="54" fill="#1a2a6e" transform="scale(0.95,1)">70</text><text x="7.8" y="55.6" font-family="Liberation Sans" font-weight="bold" font-size="54" fill="#1a2a6e" transform="scale(0.95,1)">70</text><text x="9.0" y="56.5" font-family="Liberation Sans" font-weight="bold" font-size="54" fill="#1a2a6e" transform="scale(0.95,1)">70</text><text x="10.2" y="57.4" font-family="Liberation Sans" font-weight="bold" font-size="54" fill="#1a2a6e" transform="scale(0.95,1)">70</text><text x="3" y="52" font-family="Liberation Sans" font-weight="bold" font-size="54" fill="#f6d13e" stroke="#e0b526" stroke-width="0.8" transform="scale(0.95,1)">70</text><ellipse cx="45" cy="33" rx="5" ry="9" fill="#f6d13e"/><text x="40.5" y="37" font-family="Liberation Sans" font-weight="bold" font-size="11" fill="#1a2a6e">%</text></svg><div class="a" style="left:327.5px;top:664px;width:19.5px;height:49px;background:#f26a6a;"></div>
<svg style="left:331px;top:667px" width="11" height="11" viewBox="0 0 11 11"><circle cx="5.5" cy="5.5" r="4.5" fill="none" stroke="#fff" stroke-width="1"/><path d="M5.5 3 V6.5 M5.5 7.5 V8.5" stroke="#fff"/></svg><div class="t" style="left:334px;top:680.8px;font-size:8.5px;color:#fff;font-weight:normal;font-style:normal;">В</div>
<div class="t" style="left:334px;top:690.8px;font-size:8.5px;color:#fff;font-weight:normal;font-style:normal;">а</div>
<div class="t" style="left:334px;top:700.8px;font-size:8.5px;color:#fff;font-weight:normal;font-style:normal;">ж</div>
<div class="t" style="left:352px;top:676.2px;font-size:8px;color:#5a5a5a;font-weight:normal;font-style:normal;letter-spacing:0.3px">Кілька годин перевірки зошитів вчителем держава оцінює в <b style="color:#222">одну чашку кави</b>. Такого</div>
<div class="t" style="left:352px;top:687.2px;font-size:8px;color:#5a5a5a;font-weight:normal;font-style:normal;letter-spacing:0.3px">висновку дійшла вчителька зарубіжної літератури <b style="color:#222">Аліна Мец</b>, яка <span style="color:#3a8ad6">записала</span> відео на</div>
<div class="t" style="left:352px;top:698.2px;font-size:8px;color:#5a5a5a;font-weight:normal;font-style:normal;letter-spacing:0.3px">цю тему у своєму TikTok.</div>
<div class="t" style="left:740px;top:583.7px;font-size:17.5px;color:#141414;font-weight:normal;font-style:normal;">Реклама</div>
<div class="t" style="left:740px;top:651.2px;font-size:17.5px;color:#141414;font-weight:normal;font-style:normal;">Лінк на відео</div>
<svg style="left:698px;top:583px" width="44" height="44" viewBox="0 0 44 44"><defs><linearGradient id="ag698583" x1="0" y1="0" x2="1" y2="1"><stop offset="0" stop-color="#ffffff"/><stop offset="1" stop-color="#c9d9ef"/></linearGradient></defs><g transform="translate(22,22) rotate(-35) "><path d="M-18 0 L-4 -12 V-6 H16 V6 H-4 V12 Z" fill="#9a9a9a" opacity="0.35" transform="translate(2,3)"/><path d="M-18 0 L-4 -12 V-6 H16 V6 H-4 V12 Z" fill="url(#ag698583)" stroke="#dde8f6" stroke-width="0.8"/></g></svg><svg style="left:700px;top:662px" width="44" height="44" viewBox="0 0 44 44"><defs><linearGradient id="ag700662" x1="0" y1="0" x2="1" y2="1"><stop offset="0" stop-color="#ffffff"/><stop offset="1" stop-color="#c9d9ef"/></linearGradient></defs><g transform="translate(22,22) rotate(-35) "><path d="M-18 0 L-4 -12 V-6 H16 V6 H-4 V12 Z" fill="#9a9a9a" opacity="0.35" transform="translate(2,3)"/><path d="M-18 0 L-4 -12 V-6 H16 V6 H-4 V12 Z" fill="url(#ag700662)" stroke="#dde8f6" stroke-width="0.8"/></g></svg><svg style="left:812px;top:664px" width="44" height="44" viewBox="0 0 44 44"><defs><linearGradient id="ag812664" x1="0" y1="0" x2="1" y2="1"><stop offset="0" stop-color="#ffffff"/><stop offset="1" stop-color="#c9d9ef"/></linearGradient></defs><g transform="translate(22,22) rotate(215) "><path d="M-18 0 L-4 -12 V-6 H16 V6 H-4 V12 Z" fill="#9a9a9a" opacity="0.35" transform="translate(2,3)"/><path d="M-18 0 L-4 -12 V-6 H16 V6 H-4 V12 Z" fill="url(#ag812664)" stroke="#dde8f6" stroke-width="0.8"/></g></svg><div class="a" style="left:861px;top:529px;width:286px;height:186px;background:#fff;"></div>
<svg style="left:868px;top:530px" width="10" height="12" viewBox="0 0 10 12"><path d="M5 1 V9 C5 10.5 4 11 3 11 C1.5 11 1 10 1 9 C1 8 2 7 3.5 7.2 M5 1 C5.5 3 7 4 9 4" fill="none" stroke="#111" stroke-width="1.6"/></svg><div class="t" style="left:878px;top:531.7px;font-size:11px;color:#111;font-weight:bold;font-style:normal;">TikTok</div>
<div class="a" style="left:866px;top:549px;width:71px;height:13px;background:#f1f1f2;border-radius:6px"></div>
<svg style="left:869px;top:552px" width="7" height="7" viewBox="0 0 7 7"><circle cx="3" cy="3" r="2.2" fill="none" stroke="#777"/><path d="M4.6 4.6 L6.5 6.5" stroke="#777"/></svg><svg style="left:869px;top:570px" width="10" height="10" viewBox="0 0 10 10"><path d="M1 5 L5 1 L9 5 V9 H1 Z" fill="none" stroke="#333" stroke-width="1.2"/></svg><div class="t" style="left:883px;top:572.4px;font-size:6px;color:#666;font-weight:normal;font-style:normal;">Для тебе</div>
<svg style="left:869px;top:585px" width="10" height="10" viewBox="0 0 10 10"><path d="M5 1 A4 4 0 1 0 5.01 1 M3.5 6.5 L6.5 3.5" fill="none" stroke="#333" stroke-width="1.2"/></svg><div class="t" style="left:883px;top:587.4px;font-size:6px;color:#666;font-weight:normal;font-style:normal;">Дав. інші</div>
<svg style="left:869px;top:600px" width="10" height="10" viewBox="0 0 10 10"><path d="M4 1 A2.2 2.2 0 1 0 4.01 1 M0.5 9.5 C1 6 7 6 7.5 9.5 M8 4 V8 M6 6 H10" fill="none" stroke="#333" stroke-width="1.2"/></svg><div class="t" style="left:883px;top:602.4px;font-size:6px;color:#666;font-weight:normal;font-style:normal;">Стежування</div>
<svg style="left:869px;top:615px" width="10" height="10" viewBox="0 0 10 10"><path d="M1 2 H9 V9 H1 Z M4 4 L7 5.5 L4 7 Z" fill="none" stroke="#333" stroke-width="1.2"/></svg><div class="t" style="left:883px;top:617.4px;font-size:6px;color:#666;font-weight:normal;font-style:normal;">LIVE-трансляції</div>
<svg style="left:869px;top:630px" width="10" height="10" viewBox="0 0 10 10"><path d="M1 1 H9 V9 H1 Z M5 3 V7 M3 5 H7" fill="none" stroke="#333" stroke-width="1.2"/></svg><div class="t" style="left:883px;top:632.4px;font-size:6px;color:#666;font-weight:normal;font-style:normal;">Завантажити</div>
<svg style="left:869px;top:645px" width="10" height="10" viewBox="0 0 10 10"><path d="M5 1 A2.2 2.2 0 1 0 5.01 1 M1 9.5 C1.5 6 8.5 6 9 9.5" fill="none" stroke="#333" stroke-width="1.2"/></svg><div class="t" style="left:883px;top:647.4px;font-size:6px;color:#666;font-weight:normal;font-style:normal;">Профіль</div>
<svg style="left:869px;top:660px" width="10" height="10" viewBox="0 0 10 10"><path d="M1 8 L4 5 L6 7 L9 2" fill="none" stroke="#333" stroke-width="1.2"/></svg><div class="t" style="left:883px;top:662.4px;font-size:6px;color:#666;font-weight:normal;font-style:normal;">Більше</div>
<div class="a" style="left:868px;top:677px;width:69px;height:14px;background:#fe2c55;border-radius:3px"></div>
<div class="t" style="left:895px;top:682.3px;font-size:5.5px;color:#fff;font-weight:bold;font-style:normal;">Увійти</div>
<div class="t" style="left:868px;top:708.2px;font-size:4.5px;color:#aaa;font-weight:normal;font-style:normal;">© 2024 TikTok</div>
<div class="a" style="left:993.5px;top:529px;width:120px;height:184px;background:linear-gradient(100deg,#2b2c8f 0%,#2f2f72 35%,#393456 100%);border-radius:3px"></div>
<svg style="left:993px;top:529px" width="121" height="184" viewBox="0 0 121 184"><defs><clipPath id="vc"><rect width="121" height="184" rx="3"/></clipPath><linearGradient id="hairg" x1="0" y1="0" x2="1" y2="0"><stop offset="0" stop-color="#5e524c"/><stop offset="0.5" stop-color="#857a72"/><stop offset="1" stop-color="#5a4f49"/></linearGradient></defs><g clip-path="url(#vc)"><path d="M0 184 C2 150 12 132 40 124 H80 C106 130 118 150 121 184 Z" fill="#141416"/><path d="M34 78 C33 60 44 52 60 52 C76 52 86 60 86 78 L88 122 C84 126 80 126 77 122 L44 122 C40 126 35 126 32 122 Z" fill="url(#hairg)"/><path d="M52 108 H68 V126 H52 Z" fill="#c9a08c"/><ellipse cx="60" cy="93" rx="17" ry="24" fill="#dcb3a0"/><path d="M40 80 C40 62 48 56 60 56 C73 56 81 62 81 80 C76 74 70 70 60 70 C52 70 45 74 40 80 Z" fill="#6c6059"/><path d="M56 60 L58 84 L62 84 L64 60 Z" fill="#6a5e57"/><ellipse cx="51" cy="85" rx="7.5" ry="4.5" fill="none" stroke="#dfe8b0" stroke-width="1.8"/><ellipse cx="69" cy="85" rx="7.5" ry="4.5" fill="none" stroke="#dfe8b0" stroke-width="1.8"/><ellipse cx="60" cy="103" rx="4" ry="2.3" fill="#c45f55"/><path d="M45 148 L100 156 L96 170 L42 160 Z" fill="#4769b4"/><path d="M30 160 L112 162 L116 184 L28 184 Z" fill="#e4e6f4"/><path d="M36 166 L116 168 V184 H34 Z" fill="#c6cbe6"/><rect x="40" y="157" width="22" height="5" fill="#7bcf6e"/></g></svg><div class="a" style="left:1119px;top:592px;width:16px;height:16px;background:#c8c8cc;border-radius:50%"></div>
<div class="a" style="left:1123px;top:604px;width:8px;height:8px;background:#fe2c55;border-radius:50%;border:1px solid #fff"></div>
<div class="a" style="left:1119px;top:618px;width:16px;height:16px;background:#f1f1f2;border-radius:50%"></div>
<div class="a" style="left:1119px;top:645px;width:16px;height:16px;background:#f1f1f2;border-radius:50%"></div>
<div class="a" style="left:1119px;top:672px;width:16px;height:16px;background:#f1f1f2;border-radius:50%"></div>
<div class="a" style="left:1119px;top:698px;width:16px;height:16px;background:#f1f1f2;border-radius:50%"></div>
<svg style="left:1122px;top:622px" width="10" height="9" viewBox="0 0 10 9"><path d="M5 8.5 L1 4.5 C-0.5 3 0.5 0.5 2.5 0.5 C3.8 0.5 4.5 1.5 5 2 C5.5 1.5 6.2 0.5 7.5 0.5 C9.5 0.5 10.5 3 9 4.5 Z" fill="#161616"/></svg><svg style="left:1122px;top:649px" width="10" height="9" viewBox="0 0 10 9"><ellipse cx="5" cy="4" rx="4.5" ry="3.6" fill="#161616"/><path d="M3 7 L2 9 L5 7.5" fill="#161616"/></svg><svg style="left:1124px;top:676px" width="7" height="9" viewBox="0 0 7 9"><path d="M0 0 H7 V9 L3.5 6.5 L0 9 Z" fill="#161616"/></svg><svg style="left:1122px;top:702px" width="10" height="8" viewBox="0 0 10 8"><path d="M6 0 L10 4 L6 8 V5.5 C3 5.5 1.5 6.5 0 8 C0.5 4 2.5 2.5 6 2.5 Z" fill="#161616"/></svg><div class="a" style="left:1124px;top:640px;width:6px;height:1.5px;background:#bbb;"></div>
<div class="a" style="left:1124px;top:667px;width:6px;height:1.5px;background:#bbb;"></div>
<div class="a" style="left:1124px;top:694px;width:6px;height:1.5px;background:#bbb;"></div>
<div class="a" style="left:1356px;top:100px;width:167px;height:94px;border-radius:7px;overflow:hidden;background:linear-gradient(90deg,#c8c4bd 0%,#dcdad6 35%,#e4e4e1 65%,#d5d6d3 100%)"><div class="a" style="left:0;top:0;width:167px;height:40px;background:linear-gradient(180deg,rgba(255,255,255,0.35),rgba(255,255,255,0))"></div><div class="a" style="left:0;top:0;width:46px;height:94px;background:linear-gradient(90deg,#7a4a22 0%,#b7783c 25%,#9c6330 55%,#b98048 80%,#cbbfae 100%)"></div><div class="a" style="left:12px;top:12px;width:22px;height:82px;background:#b47a42;opacity:0.7;filter:blur(1.5px)"></div><div class="a" style="left:138px;top:6px;width:28px;height:9px;background:#666;border-radius:5px;filter:blur(2.5px)"></div><div class="a" style="left:86px;top:44px;width:46px;height:52px;background:#3a2d29;border-radius:50% 50% 30% 30%"></div><div class="a" style="left:118px;top:40px;width:16px;height:24px;background:#2e2421;border-radius:50%"></div><div class="a" style="left:96px;top:62px;width:30px;height:32px;background:#8d7166;border-radius:45%"></div><div class="a" style="left:108px;top:88px;width:30px;height:6px;background:#c4562a"></div></div><div class="a" style="left:1360px;top:172px;width:117px;height:20px;background:rgba(30,31,34,0.88);border-radius:5px"></div>
<svg style="left:1364px;top:175px" width="14" height="14" viewBox="0 0 14 14"><rect x="4.5" y="1" width="5" height="8" rx="2.5" fill="#e8524a"/><path d="M2.5 6.5 C2.5 9.5 4.5 11 7 11 C9.5 11 11.5 9.5 11.5 6.5 M7 11 V13 M4.5 13 H9.5" fill="none" stroke="#e8524a" stroke-width="1.2"/><path d="M1.5 13 L12.5 1.5" stroke="#e8524a" stroke-width="1.4"/></svg><div class="t" style="left:1382px;top:176.0px;font-size:13px;color:#e6e6e6;font-weight:normal;font-style:normal;">Yulia Andrienko</div>
<div class="a" style="left:1402px;top:202px;width:75px;height:80px;background:#c9461a;border-radius:7px 7px 0 0"></div>
<div class="t" style="left:1422px;top:221.5px;font-size:39px;color:#fff;font-weight:normal;font-style:normal;">M</div>
<div class="a" style="left:1360px;top:265px;width:139px;height:20px;background:rgba(30,31,34,0.88);border-radius:5px"></div>
<svg style="left:1364px;top:268px" width="14" height="14" viewBox="0 0 14 14"><rect x="4.5" y="1" width="5" height="8" rx="2.5" fill="#e8524a"/><path d="M2.5 6.5 C2.5 9.5 4.5 11 7 11 C9.5 11 11.5 9.5 11.5 6.5 M7 11 V13 M4.5 13 H9.5" fill="none" stroke="#e8524a" stroke-width="1.2"/><path d="M1.5 13 L12.5 1.5" stroke="#e8524a" stroke-width="1.4"/></svg><div class="t" style="left:1382px;top:269.7px;font-size:13px;color:#e6e6e6;font-weight:normal;font-style:normal;">Марія Прокопенко</div>
<div class="a" style="left:1402px;top:297px;width:75px;height:79px;background:#6b4c41;border-radius:7px 7px 0 0"></div>
<div class="t" style="left:1426.5px;top:316.0px;font-size:39px;color:#fff;font-weight:normal;font-style:normal;">H</div>
<div class="a" style="left:1360px;top:359px;width:141px;height:20px;background:rgba(30,31,34,0.88);border-radius:5px"></div>
<svg style="left:1364px;top:362px" width="14" height="14" viewBox="0 0 14 14"><rect x="4.5" y="1" width="5" height="8" rx="2.5" fill="#e8524a"/><path d="M2.5 6.5 C2.5 9.5 4.5 11 7 11 C9.5 11 11.5 9.5 11.5 6.5 M7 11 V13 M4.5 13 H9.5" fill="none" stroke="#e8524a" stroke-width="1.2"/><path d="M1.5 13 L12.5 1.5" stroke="#e8524a" stroke-width="1.4"/></svg><div class="t" style="left:1382px;top:362.9px;font-size:13px;color:#e6e6e6;font-weight:normal;font-style:normal;">Наталія Цибульник</div>
<div class="a" style="left:1356px;top:382px;width:167px;height:92px;overflow:hidden;background:linear-gradient(180deg,#f4ecd8 0%,#efe4cb 60%,#e2d4b8 100%)"><div class="a" style="left:4px;top:28px;width:25px;height:25px;background:#3e4a36;border:1.5px solid #c8b48a"></div><div class="a" style="left:9px;top:32px;width:12px;height:14px;background:#c9b7c8;border-radius:50%;opacity:0.8"></div><div class="a" style="left:36px;top:27px;width:22px;height:21px;background:#3a2a22;border:1.5px solid #c8aa78"></div><div class="a" style="left:41px;top:31px;width:11px;height:8px;background:#c8454a;border-radius:50%"></div><div class="a" style="left:60px;top:8px;width:42px;height:84px;background:#6d5038;border-radius:10px 10px 0 0"></div><div class="a" style="left:67px;top:18px;width:18px;height:30px;background:#5d6470;border-radius:6px 6px 0 0"></div><div class="a" style="left:88px;top:18px;width:9px;height:40px;background:#7f7060"></div><div class="a" style="left:122px;top:6px;width:13px;height:13px;background:#e8dcd0;border:1.5px solid #8a6a4a;border-radius:50%"></div><div class="a" style="left:108px;top:23px;width:46px;height:32px;background:#0e1014;transform:skewY(-4deg)"></div><div class="a" style="left:153px;top:0;width:14px;height:92px;background:linear-gradient(90deg,#a8744a,#7a5232)"></div><div class="a" style="left:106px;top:56px;width:47px;height:14px;background:#cfc2ae"></div><div class="a" style="left:124px;top:52px;width:10px;height:14px;background:#6a4a3a;border-radius:40%"></div><div class="a" style="left:106px;top:68px;width:47px;height:24px;background:#8e6444"></div><div class="a" style="left:0;top:62px;width:66px;height:30px;background:#8f8680;border-radius:8px 8px 0 0"></div><div class="a" style="left:64px;top:41px;width:42px;height:51px;background:#c4978a;border-radius:45% 45% 10% 10%"></div><div class="a" style="left:74px;top:60px;width:24px;height:28px;background:#b48276;border-radius:40%"></div></div><div class="a" style="left:1360px;top:452px;width:119px;height:20px;background:rgba(30,31,34,0.88);border-radius:5px"></div>
<svg style="left:1364px;top:455px" width="14" height="14" viewBox="0 0 14 14"><rect x="4.5" y="1" width="5" height="8" rx="2.5" fill="#e8524a"/><path d="M2.5 6.5 C2.5 9.5 4.5 11 7 11 C9.5 11 11.5 9.5 11.5 6.5 M7 11 V13 M4.5 13 H9.5" fill="none" stroke="#e8524a" stroke-width="1.2"/><path d="M1.5 13 L12.5 1.5" stroke="#e8524a" stroke-width="1.4"/></svg><div class="t" style="left:1382px;top:456.7px;font-size:13px;color:#e6e6e6;font-weight:normal;font-style:normal;">Viktoriia Herman</div>
<div class="a" style="left:1355px;top:474px;width:169px;height:96px;overflow:hidden;border:2.8px solid #34e6a0;background:linear-gradient(90deg,#3b3d3e 0%,#444647 35%,#5e605f 70%,#656766 100%)"><div class="a" style="left:0;top:0;width:163px;height:14px;background:linear-gradient(180deg,#2e3030,rgba(60,62,62,0))"></div><div class="a" style="left:47px;top:-2px;width:76px;height:62px;background:#252020;border-radius:50% 50% 40% 40%"></div><div class="a" style="left:61px;top:5px;width:49px;height:61px;background:#d39e8d;border-radius:45% 45% 50% 50%"></div><div class="a" style="left:66px;top:26px;width:14px;height:3px;background:#6a4a44;border-radius:2px"></div><div class="a" style="left:89px;top:26px;width:14px;height:3px;background:#6a4a44;border-radius:2px"></div><div class="a" style="left:80px;top:48px;width:14px;height:6px;background:#c0605c;border-radius:50%"></div><div class="a" style="left:30px;top:59px;width:122px;height:40px;background:#bad5ec;border-radius:45% 45% 0 0"></div><div class="a" style="left:137px;top:56px;width:26px;height:22px;background:#2d2a3a"></div><div class="a" style="left:140px;top:70px;width:23px;height:8px;background:#9b2a2a"></div></div><div class="a" style="left:1360px;top:546px;width:111px;height:20px;background:rgba(30,31,34,0.85);border-radius:5px"></div>
<div class="t" style="left:1363px;top:550.7px;font-size:13px;color:#e6e6e6;font-weight:normal;font-style:normal;">Ольга Кононенко</div>
<div class="a" style="left:1356px;top:571px;width:167px;height:92px;background:#242628;"></div>
<div class="a" style="left:1412px;top:571px;width:54px;height:92px;overflow:hidden;background:linear-gradient(90deg,#e9e9e7 0%,#e0e0de 60%,#cfcfcd 100%)"><div class="a" style="left:40px;top:0;width:14px;height:52px;background:#b4b4b2"></div><div class="a" style="left:7px;top:26px;width:7px;height:4px;background:#444"></div><div class="a" style="left:5px;top:19px;width:46px;height:52px;background:#3d2b25;border-radius:50% 50% 25% 25%"></div><div class="a" style="left:16px;top:26px;width:27px;height:34px;background:#d2a18f;border-radius:45% 45% 50% 50%"></div><div class="a" style="left:0;top:62px;width:54px;height:30px;background:#cdb2a3;border-radius:30% 30% 0 0"></div><div class="a" style="left:35px;top:50px;width:14px;height:20px;background:#d6a896;border-radius:40%"></div></div><div class="a" style="left:1360px;top:639px;width:126px;height:20px;background:rgba(30,31,34,0.88);border-radius:5px"></div>
<svg style="left:1364px;top:642px" width="14" height="14" viewBox="0 0 14 14"><rect x="4.5" y="1" width="5" height="8" rx="2.5" fill="#e8524a"/><path d="M2.5 6.5 C2.5 9.5 4.5 11 7 11 C9.5 11 11.5 9.5 11.5 6.5 M7 11 V13 M4.5 13 H9.5" fill="none" stroke="#e8524a" stroke-width="1.2"/><path d="M1.5 13 L12.5 1.5" stroke="#e8524a" stroke-width="1.4"/></svg><div class="t" style="left:1382px;top:644.0px;font-size:13px;color:#e6e6e6;font-weight:normal;font-style:normal;">Наталія Громова</div>
<div class="t" style="left:1371px;top:700.9px;font-size:17.5px;color:#f2f2f2;font-weight:bold;font-style:normal;">Бокатова Аліна</div>
<div class="a" style="left:1360px;top:734px;width:117px;height:20px;background:rgba(30,31,34,0.88);border-radius:5px"></div>
<svg style="left:1364px;top:737px" width="14" height="14" viewBox="0 0 14 14"><rect x="4.5" y="1" width="5" height="8" rx="2.5" fill="#e8524a"/><path d="M2.5 6.5 C2.5 9.5 4.5 11 7 11 C9.5 11 11.5 9.5 11.5 6.5 M7 11 V13 M4.5 13 H9.5" fill="none" stroke="#e8524a" stroke-width="1.2"/><path d="M1.5 13 L12.5 1.5" stroke="#e8524a" stroke-width="1.4"/></svg><div class="t" style="left:1382px;top:738.0px;font-size:13px;color:#e6e6e6;font-weight:normal;font-style:normal;">Бокатова Аліна</div>
<div class="a" style="left:1401px;top:756px;width:74px;height:34px;background:#121416;border-radius:6px"></div>
<svg style="left:1430px;top:768px" width="16" height="10" viewBox="0 0 16 10"><path d="M2 2 L8 8 L14 2" fill="none" stroke="#aab" stroke-width="1.6"/></svg><div class="a" style="left:1270px;top:405px;width:4px;height:42px;background:#6b6b6b;border-radius:2px"></div>
<div class="a" style="left:0px;top:797px;width:1600px;height:60px;background:#000;"></div>
<svg style="left:42px;top:806px" width="26" height="27" viewBox="0 0 26 27"><rect x="9" y="1" width="8" height="14" rx="4" fill="none" stroke="#f2f2f2" stroke-width="1.6"/><path d="M5 11 C5 16 8.5 19 13 19 C17.5 19 21 16 21 11 M13 19 V25 M8 25.5 H18" fill="none" stroke="#f2f2f2" stroke-width="1.6"/><path d="M3 25 L24 2" stroke="#e5175a" stroke-width="2.2"/></svg><div class="t" style="left:-5.5px;top:838.8px;width:120px;text-align:center;font-size:12px;font-weight:bold;color:#f0f0f0">Audio</div>
<svg style="left:83px;top:815px" width="9" height="6" viewBox="0 0 9 6"><path d="M1 5 L4.5 1.5 L8 5" fill="none" stroke="#eee" stroke-width="1.6"/></svg><svg style="left:138px;top:807px" width="28" height="26" viewBox="0 0 28 26"><rect x="2" y="6" width="16" height="13" rx="2.5" fill="none" stroke="#f2f2f2" stroke-width="1.6"/><path d="M18 10.5 L25 6.5 V18.5 L18 14.5" fill="none" stroke="#f2f2f2" stroke-width="1.6"/><path d="M1 25 L25 1" stroke="#e5175a" stroke-width="2.2"/></svg><div class="t" style="left:91.5px;top:838.8px;width:120px;text-align:center;font-size:12px;font-weight:bold;color:#f0f0f0">Video</div>
<svg style="left:186px;top:815px" width="9" height="6" viewBox="0 0 9 6"><path d="M1 5 L4.5 1.5 L8 5" fill="none" stroke="#eee" stroke-width="1.6"/></svg><svg style="left:477px;top:810px" width="22" height="20" viewBox="0 0 22 20"><circle cx="6.5" cy="4.5" r="3.3" fill="none" stroke="#f2f2f2" stroke-width="1.5"/><circle cx="14.5" cy="8" r="3.3" fill="none" stroke="#f2f2f2" stroke-width="1.5"/><path d="M1 15 C1 11 3 10 6.5 10 M8 19 C8 15 10.5 13.5 14.5 13.5 C18.5 13.5 21 15 21 19 Z" fill="none" stroke="#f2f2f2" stroke-width="1.5"/><path d="M1 15 V19 H8" fill="none" stroke="#f2f2f2" stroke-width="1.5"/></svg><div class="t" style="left:505px;top:813.2px;font-size:11px;color:#bbb;font-weight:normal;font-style:normal;">13</div>
<div class="t" style="left:427.5px;top:838.8px;width:120px;text-align:center;font-size:12px;font-weight:bold;color:#f0f0f0">Participants</div>
<svg style="left:538px;top:815px" width="9" height="6" viewBox="0 0 9 6"><path d="M1 5 L4.5 1.5 L8 5" fill="none" stroke="#eee" stroke-width="1.6"/></svg><svg style="left:589px;top:807px" width="26" height="25" viewBox="0 0 26 25"><path d="M7 4 C8 2 10 1.5 13 1.5 H19 C22.5 1.5 24.5 3.5 24.5 7 V11 C24.5 13.5 23.5 15 21.5 15.5" fill="none" stroke="#f2f2f2" stroke-width="1.5"/><path d="M6 5 H15 C18.5 5 20.5 7 20.5 10.5 V13.5 C20.5 17 18.5 19 15 19 H10 L6 23 V19 C3 18.5 1.5 16.5 1.5 13.5 V10.5 C1.5 7 3 5 6 5 Z" fill="none" stroke="#f2f2f2" stroke-width="1.5"/><circle cx="7" cy="12" r="1.2" fill="#f2f2f2"/><circle cx="11" cy="12" r="1.2" fill="#f2f2f2"/><circle cx="15" cy="12" r="1.2" fill="#f2f2f2"/></svg><div class="t" style="left:543px;top:838.8px;width:120px;text-align:center;font-size:12px;font-weight:bold;color:#f0f0f0">Chat</div>
<svg style="left:632px;top:815px" width="9" height="6" viewBox="0 0 9 6"><path d="M1 5 L4.5 1.5 L8 5" fill="none" stroke="#eee" stroke-width="1.6"/></svg><svg style="left:678px;top:809px" width="27" height="23" viewBox="0 0 27 23"><path d="M13.5 21.5 L3.5 12 C0.5 9 1 4 5 2.2 C8.5 0.8 11.5 2.5 13.5 5 C15.5 2.5 18.5 0.8 22 2.2 C26 4 26.5 9 23.5 12 Z" fill="none" stroke="#f2f2f2" stroke-width="1.6"/></svg><div class="t" style="left:631.5px;top:838.8px;width:120px;text-align:center;font-size:12px;font-weight:bold;color:#f0f0f0">React</div>
<svg style="left:716px;top:815px" width="9" height="6" viewBox="0 0 9 6"><path d="M1 5 L4.5 1.5 L8 5" fill="none" stroke="#eee" stroke-width="1.6"/></svg><div class="a" style="left:771px;top:810px;width:26px;height:21px;background:#22d884;border-radius:4px"></div>
<svg style="left:777px;top:813px" width="14" height="14" viewBox="0 0 14 14"><path d="M7 1 L12.5 7 H9 V13 H5 V7 H1.5 Z" fill="#000"/></svg><div class="t" style="left:724px;top:838.8px;width:120px;text-align:center;font-size:12px;font-weight:bold;color:#f0f0f0">Share</div>
<svg style="left:871px;top:807px" width="27" height="25" viewBox="0 0 27 25"><defs><linearGradient id="aig" x1="0" y1="0" x2="1" y2="1"><stop offset="0" stop-color="#ffffff"/><stop offset="1" stop-color="#9fd0f0"/></linearGradient></defs><path d="M11 5 C12 12 14 14 21 15 C14 16 12 18 11 25 C10 18 8 16 1 15 C8 14 10 12 11 5 Z" fill="url(#aig)"/><path d="M21 1 C21.5 3.5 22.5 4.5 25 5 C22.5 5.5 21.5 6.5 21 9 C20.5 6.5 19.5 5.5 17 5 C19.5 4.5 20.5 3.5 21 1 Z" fill="#e0f0ff"/></svg><div class="t" style="left:824.5px;top:838.8px;width:120px;text-align:center;font-size:12px;font-weight:bold;color:#f0f0f0">AI Companion</div>
<svg style="left:971px;top:807px" width="26" height="26" viewBox="0 0 26 26"><circle cx="13" cy="13" r="11.5" fill="none" stroke="#f2f2f2" stroke-width="1.6"/><circle cx="13" cy="7.5" r="1.4" fill="#f2f2f2"/><path d="M10.5 11 H13.5 V18.5 M10.5 18.5 H16" fill="none" stroke="#f2f2f2" stroke-width="1.8"/></svg><div class="t" style="left:924.5px;top:838.8px;width:120px;text-align:center;font-size:12px;font-weight:bold;color:#f0f0f0">Meeting info</div>
<svg style="left:1065px;top:808px" width="25" height="25" viewBox="0 0 25 25"><path d="M2 9 V6 C2 3.5 3.5 2 6 2 H9" fill="none" stroke="#f2f2f2" stroke-width="1.6"/><circle cx="18.5" cy="6" r="4" fill="none" stroke="#f2f2f2" stroke-width="1.6"/><circle cx="6" cy="18.5" r="4" fill="none" stroke="#f2f2f2" stroke-width="1.6"/><path d="M23 15 V18.5 C23 21 21.5 23 19 23 H15" fill="none" stroke="#f2f2f2" stroke-width="1.6"/></svg><div class="t" style="left:1017.5px;top:838.8px;width:120px;text-align:center;font-size:12px;font-weight:bold;color:#f0f0f0">Apps</div>
<svg style="left:1147px;top:807px" width="26" height="26" viewBox="0 0 26 26"><circle cx="13" cy="13" r="11.5" fill="none" stroke="#f2f2f2" stroke-width="1.6"/><circle cx="13" cy="13" r="5.5" fill="#f2f2f2"/></svg><div class="t" style="left:1100.5px;top:838.8px;width:120px;text-align:center;font-size:12px;font-weight:bold;color:#f0f0f0">Record</div>
<svg style="left:1232px;top:807px" width="26" height="26" viewBox="0 0 26 26"><circle cx="13" cy="13" r="11.5" fill="none" stroke="#f2f2f2" stroke-width="1.6"/><circle cx="8" cy="13" r="1.5" fill="#f2f2f2"/><circle cx="13" cy="13" r="1.5" fill="#f2f2f2"/><circle cx="18" cy="13" r="1.5" fill="#f2f2f2"/></svg><div class="t" style="left:1185.5px;top:838.8px;width:120px;text-align:center;font-size:12px;font-weight:bold;color:#f0f0f0">More</div>
<svg style="left:1535px;top:806px" width="30" height="30" viewBox="0 0 30 30"><path d="M11 2.2 H27.5 V18 L19.5 26 V6.5 L27.5 2.2" fill="none" stroke="#e8175d" stroke-width="1.7" stroke-linejoin="round"/><g fill="none" stroke-linecap="round" stroke-linejoin="round"><path d="M10.5 12 L9.5 19.5 M5 17.5 L10.5 12.5 L15.5 16.5 M9.5 19.5 L6.5 26.5 M9.5 19.5 L13.5 22 L13 26.5" stroke="#f2f2f2" stroke-width="4.6"/><path d="M10.5 12 L9.5 19.5 M5 17.5 L10.5 12.5 L15.5 16.5 M9.5 19.5 L6.5 26.5 M9.5 19.5 L13.5 22 L13 26.5" stroke="#000" stroke-width="1.6"/></g><circle cx="11" cy="7" r="3" fill="#000" stroke="#f2f2f2" stroke-width="1.5"/></svg><div class="t" style="left:1488.5px;top:838.8px;width:120px;text-align:center;font-size:12px;font-weight:bold;color:#f0f0f0">Leave</div>
<div class="a" style="left:0px;top:857px;width:1600px;height:43px;background:#d9dfe8;"></div>
<svg style="left:17px;top:871px" width="16" height="16" viewBox="0 0 16 16"><path d="M0 2.2 L6.5 1.3 V7.5 H0 Z M7.5 1.1 L16 0 V7.5 H7.5 Z M0 8.5 H6.5 V14.7 L0 13.8 Z M7.5 8.5 H16 V16 L7.5 14.9 Z" fill="#111"/></svg><div class="a" style="left:51px;top:858px;width:298px;height:42px;background:#fff;"></div>
<svg style="left:62px;top:869px" width="18" height="19" viewBox="0 0 18 19"><circle cx="10.5" cy="7" r="5.5" fill="none" stroke="#222" stroke-width="1.4"/><path d="M6.5 11 L1 17.5" stroke="#222" stroke-width="1.6"/></svg><div class="t" style="left:92px;top:871.9px;font-size:15.5px;color:#333;font-weight:normal;font-style:normal;">Пошук</div>
<svg style="left:366px;top:870px" width="18" height="18" viewBox="0 0 18 18"><rect x="1" y="4" width="10" height="10" fill="none" stroke="#222" stroke-width="1.4"/><path d="M0 1.5 H12 M0 16.5 H12 M15 1 V4 M15 7 V11 M15 14 V17" stroke="#222" stroke-width="1.4"/></svg><svg style="left:415px;top:866px" width="27" height="26" viewBox="0 0 27 26"><defs><linearGradient id="cp1" x1="0" y1="0" x2="0.3" y2="1"><stop offset="0" stop-color="#1b6ff0"/><stop offset="0.45" stop-color="#2fc0b0"/><stop offset="0.8" stop-color="#b6d84a"/><stop offset="1" stop-color="#f3c23a"/></linearGradient><linearGradient id="cp2" x1="0.2" y1="0" x2="0.5" y2="1"><stop offset="0" stop-color="#9a4cf0"/><stop offset="0.5" stop-color="#f04fa0"/><stop offset="1" stop-color="#f6803a"/></linearGradient></defs><path d="M8 3 H13.5 C15 3 15.7 4 15.3 5.4 L11 20 C10.5 21.5 9.6 22.5 8 22.5 H4.5 C2.5 22.5 1.7 21 2.2 19.2 L6 5 C6.3 3.8 7 3 8 3 Z" fill="url(#cp1)"/><path d="M14.5 5.5 H20.5 C22.5 5.5 23.4 7 22.9 8.8 L19 22 C18.6 23.3 17.7 24 16.4 24 H10.5 C12 23.5 12.5 22.5 13 21 L16.5 8 C16.8 6.8 15.8 5.8 14.5 5.5 Z" fill="url(#cp2)"/></svg><svg style="left:466px;top:866px" width="27" height="26" viewBox="0 0 27 26"><defs><linearGradient id="eg1" x1="0" y1="0" x2="0.6" y2="1"><stop offset="0" stop-color="#2a9be8"/><stop offset="1" stop-color="#0b4fae"/></linearGradient><linearGradient id="eg2" x1="0" y1="0" x2="1" y2="0.6"><stop offset="0" stop-color="#22a6e0"/><stop offset="1" stop-color="#52d873"/></linearGradient></defs><circle cx="13.5" cy="13" r="12" fill="url(#eg1)"/><path d="M3.5 8 C5.5 3.5 9.5 1 13.5 1 C20 1 25.5 6 25.5 12 C25.5 16 22.5 18 19 18 C15.5 18 13.5 16.5 14.5 14 C15.5 11.5 13 9.5 10.5 10 C7 10.5 5.5 13.5 6 16.5 C4 14 3 11 3.5 8 Z" fill="url(#eg2)"/><ellipse cx="12" cy="14.5" rx="3.6" ry="2.6" fill="#eef2f8"/></svg><svg style="left:519px;top:867px" width="25" height="23" viewBox="0 0 25 23"><path d="M1 2 H9 L11 4.5 H24 V21 H1 Z" fill="#e9b83a"/><path d="M1 6 H24 V21 H1 Z" fill="#fbd15b"/><rect x="7" y="13" width="11" height="4" fill="#2e7fd1"/><rect x="8.5" y="17" width="3" height="4" fill="#2e7fd1"/><rect x="13.5" y="17" width="3" height="4" fill="#2e7fd1"/></svg><svg style="left:570px;top:866px" width="27" height="25" viewBox="0 0 27 25"><path d="M9 4 L21 1 L26 4 V21 H9 Z" fill="#1a8be0"/><path d="M9 10 L26 6 V21 H9 Z" fill="#35b0f0"/><path d="M9 12 L26 21 H9 Z" fill="#0f6cbd"/><rect x="1" y="6" width="13" height="13" rx="1.5" fill="#0b5aa8"/><ellipse cx="7.5" cy="12.5" rx="3.3" ry="4" fill="none" stroke="#fff" stroke-width="1.8"/></svg><svg style="left:622px;top:866px" width="30" height="30" viewBox="0 0 30 30"><circle cx="13" cy="13" r="12" fill="#db4437"/><path d="M13 13 L2.6 19 A12 12 0 0 0 19 23.4 Z" fill="#0f9d58"/><path d="M13 13 L19 23.4 A12 12 0 0 0 23.4 7 H13 Z" fill="#f4b400"/><path d="M13 13 L23.4 7 A12 12 0 0 0 2.6 7 L2.6 19 Z" fill="#db4437"/><circle cx="13" cy="13" r="5.5" fill="#fff"/><circle cx="13" cy="13" r="4.3" fill="#4285f4"/><circle cx="20.5" cy="20.5" r="7" fill="#b7392b" stroke="#d9dfe8" stroke-width="1"/><text x="17" y="24" font-family="Liberation Sans" font-size="9" fill="#fff">M</text></svg><svg style="left:674px;top:866px" width="30" height="30" viewBox="0 0 30 30"><path d="M13 1.5 C20 1.5 24.5 5 24.5 12 C24.5 19 20 22 13 22 L9 25.5 V21.5 C4 20 1.5 17 1.5 12 C1.5 5 6 1.5 13 1.5 Z" fill="#8f5dd8"/><path d="M8.5 7 C9.5 6 10.5 6.5 11 7.5 L12 9.5 C12 10.5 11 11 11.3 11.7 C12 13 13 14 14.3 14.7 C15 15 15.5 14 16.5 14 L18.5 15 C19.5 15.5 20 16.5 19 17.5 C17.5 19 15.5 18.5 12.5 16 C9.5 13.5 7.5 10 8.5 7 Z" fill="#fff"/><circle cx="21.5" cy="21.5" r="7" fill="#e53e3a"/><text x="18.5" y="25.5" font-family="Liberation Sans" font-size="11" fill="#fff">2</text></svg><div class="a" style="left:713px;top:857px;width:48px;height:43px;background:#e8ecf2;"></div>
<div class="a" style="left:726px;top:867px;width:25px;height:24px;background:#0b5cff;border-radius:50%"></div>
<div class="t" style="left:729px;top:876.5px;font-size:6.5px;color:#fff;font-weight:bold;font-style:normal;">zoom</div>
<div class="a" style="left:614px;top:897px;width:43px;height:3px;background:#1a73d9;"></div>
<div class="a" style="left:666px;top:897px;width:42px;height:3px;background:#1a73d9;"></div>
<div class="a" style="left:713px;top:897px;width:48px;height:3px;background:#1a73d9;"></div>
<svg style="left:1160px;top:865px" width="28" height="27" viewBox="0 0 28 27"><defs><radialGradient id="sun" cx="0.4" cy="0.4" r="0.7"><stop offset="0" stop-color="#ffd25a"/><stop offset="1" stop-color="#f07a1a"/></radialGradient></defs><circle cx="12" cy="15" r="11" fill="url(#sun)"/><circle cx="18.5" cy="7.5" r="6.5" fill="#e0292b"/><text x="16" y="11" font-family="Liberation Sans" font-size="9" font-weight="bold" fill="#fff">1</text></svg><div class="t" style="left:1194px;top:873.7px;font-size:14.5px;color:#222;font-weight:normal;font-style:normal;">1°C&nbsp; Sunny</div>
<svg style="left:1291px;top:874px" width="15" height="9" viewBox="0 0 15 9"><path d="M1 8 L7.5 1.5 L14 8" fill="none" stroke="#222" stroke-width="1.5"/></svg><svg style="left:1317px;top:871px" width="15" height="16" viewBox="0 0 15 16"><rect x="3" y="4" width="7" height="8" rx="1" fill="none" stroke="#333" stroke-width="1.2"/><path d="M10 6.5 L13.5 4.5 V11.5 L10 9.5" fill="none" stroke="#333" stroke-width="1.2"/><path d="M1 3 C3 0.5 10 0.5 12 3 M1 13 C3 15.5 10 15.5 12 13" fill="none" stroke="#555" stroke-width="1"/></svg><svg style="left:1344px;top:869px" width="12" height="19" viewBox="0 0 12 19"><rect x="2.5" y="0.5" width="7" height="12" rx="3.5" fill="#333"/><path d="M1 9 C1 13 3 14.5 6 14.5 C9 14.5 11 13 11 9 M6 14.5 V18 M3 18 H9" fill="none" stroke="#333" stroke-width="1.3"/></svg><svg style="left:1364px;top:872px" width="20" height="13" viewBox="0 0 20 13"><rect x="1.5" y="2.5" width="16" height="9" fill="#222" stroke="#222"/><rect x="17.5" y="5" width="2" height="4" fill="#222"/><path d="M0 0 H5" stroke="#222" stroke-width="2"/></svg><svg style="left:1391px;top:871px" width="16" height="16" viewBox="0 0 16 16"><path d="M1 15 A14 14 0 0 1 15 1 M4 15 A11 11 0 0 1 15 4 M7 15 A8 8 0 0 1 15 7 M10 15 A5 5 0 0 1 15 10" fill="none" stroke="#444" stroke-width="1.1"/><circle cx="13.5" cy="13.5" r="1.5" fill="#222"/></svg><svg style="left:1414px;top:871px" width="18" height="16" viewBox="0 0 18 16"><path d="M1 5.5 H4.5 L9 1.5 V14.5 L4.5 10.5 H1 Z" fill="none" stroke="#333" stroke-width="1.2"/><path d="M11.5 5 C12.5 6 12.5 10 11.5 11 M14 3 C16 5 16 11 14 13" fill="none" stroke="#333" stroke-width="1.2"/></svg><div class="t" style="left:1443px;top:873.0px;font-size:13px;color:#222;font-weight:normal;font-style:normal;">УКР</div>
<div class="t" style="left:1497px;top:864.4px;font-size:12.5px;color:#222;font-weight:normal;font-style:normal;">8:57</div>
<div class="t" style="left:1480px;top:884.0px;font-size:11.8px;color:#222;font-weight:normal;font-style:normal;">16.03.2026</div>
<svg style="left:1555px;top:868px" width="24" height="24" viewBox="0 0 24 24"><path d="M1 1 H18 V13 H8 L4 17 V13 H1 Z" fill="#111"/><path d="M4 4.5 H15 M4 7.5 H15 M4 10 H11" stroke="#ddd" stroke-width="1"/><circle cx="17" cy="17.5" r="6" fill="#d9dfe8" stroke="#333" stroke-width="1"/><text x="14.6" y="21.5" font-family="Liberation Sans" font-size="10" fill="#111">1</text></svg><div class="a" style="left:1596px;top:857px;width:1px;height:43px;background:#b5bcc6;"></div>
</body></html>
